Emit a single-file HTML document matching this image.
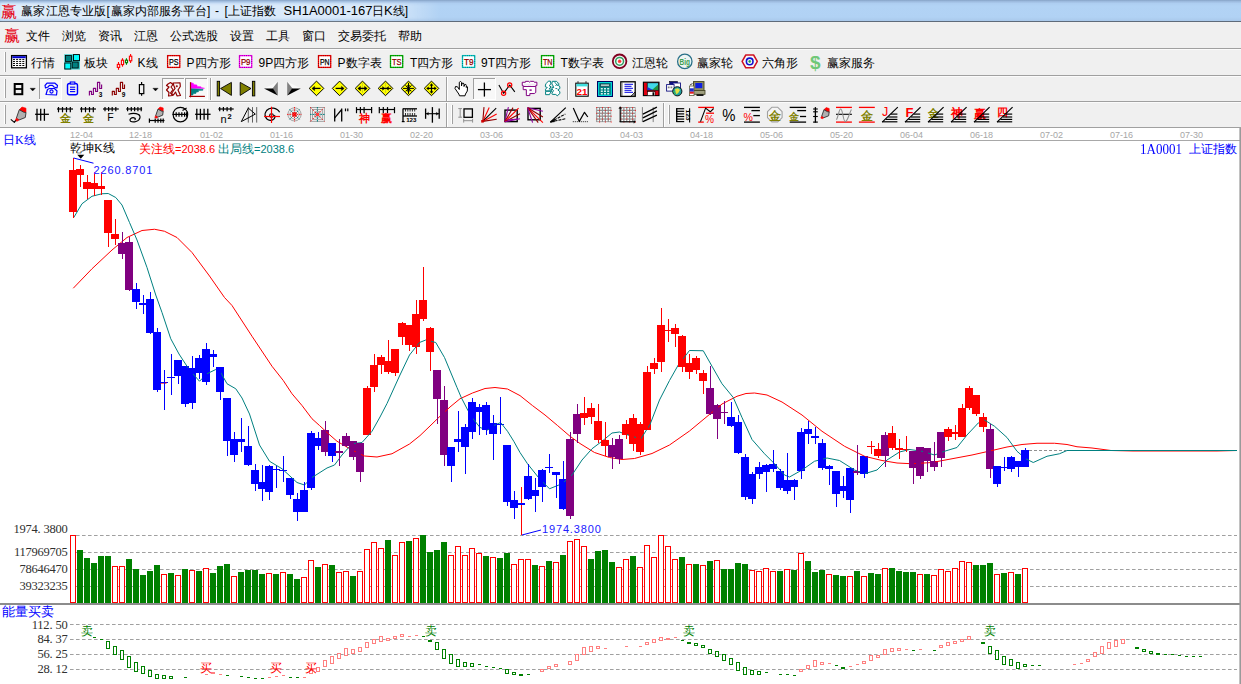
<!DOCTYPE html>
<html><head><meta charset="utf-8"><title>chart</title>
<style>
html,body{margin:0;padding:0}
body{width:1241px;height:684px;position:relative;overflow:hidden;background:#fff;font-family:"Liberation Sans",sans-serif;font-size:12px;color:#000}
.t{position:absolute;white-space:nowrap;line-height:14px;height:14px}
.cj{font-size:12px}
.blue{color:#0000ff}
.date{font-size:9px;color:#a6a6a6;line-height:10px;height:10px;margin-top:1px}
.n11{font-size:11px}
.lab{font-size:11px;color:#2020ff;letter-spacing:0.85px;line-height:13px}
.sim{font-family:"Liberation Serif",serif;font-size:12px}
.ax{width:67.5px;text-align:right;color:#303030;font-size:12.5px;letter-spacing:-0.25px}
#title{position:absolute;left:0;top:0;width:1241px;height:21px;background:linear-gradient(#86a3c6 0px,#9dbbdf 1.5px,#aecef1 3.5px,#b2d3f5 6px,#b1d2f4 17px,#a9c8ea 21px);border-bottom:1px solid #5f6b7a}
#menu{position:absolute;left:0;top:22px;width:1241px;height:26px;background:#f0f0f0}
.bar{position:absolute;left:0;width:1241px;background:#f0f0f0}
.sep{position:absolute;left:0;width:1241px;height:1px}
</style></head><body>
<div id="title"><div style="position:absolute;left:0;top:3px;width:440px;height:17px;background:linear-gradient(to right,rgba(255,255,255,.58) 0,rgba(255,255,255,.5) 88%,rgba(255,255,255,0) 100%);filter:blur(1.5px)"></div></div>
<div id="menu"></div>
<div class="bar" style="top:48px;height:80px"></div>
<svg width="1241" height="130" viewBox="0 0 1241 130" style="position:absolute;left:0;top:0">
<rect x="0.00" y="48.00" width="1241.00" height="1.00" fill="#a0a0a0" stroke="none" stroke-width="1" />
<rect x="0.00" y="75.00" width="1241.00" height="1.00" fill="#a0a0a0" stroke="none" stroke-width="1" />
<rect x="0.00" y="101.00" width="1241.00" height="1.00" fill="#a0a0a0" stroke="none" stroke-width="1" />
<rect x="0.00" y="127.00" width="1241.00" height="1.00" fill="#a0a0a0" stroke="none" stroke-width="1" />
<rect x="0.00" y="49.00" width="1241.00" height="1.00" fill="#fbfbfb" stroke="none" stroke-width="1" />
<rect x="0.00" y="76.00" width="1241.00" height="1.00" fill="#fbfbfb" stroke="none" stroke-width="1" />
<rect x="0.00" y="102.00" width="1241.00" height="1.00" fill="#fbfbfb" stroke="none" stroke-width="1" />
<rect x="4.00" y="52.00" width="1.00" height="20.00" fill="#ffffff" stroke="none" stroke-width="1" />
<rect x="5.00" y="52.00" width="1.00" height="20.00" fill="#a0a0a0" stroke="none" stroke-width="1" />
<rect x="4.00" y="79.00" width="1.00" height="19.00" fill="#ffffff" stroke="none" stroke-width="1" />
<rect x="5.00" y="79.00" width="1.00" height="19.00" fill="#a0a0a0" stroke="none" stroke-width="1" />
<rect x="4.00" y="105.00" width="1.00" height="19.00" fill="#ffffff" stroke="none" stroke-width="1" />
<rect x="5.00" y="105.00" width="1.00" height="19.00" fill="#a0a0a0" stroke="none" stroke-width="1" />
<rect x="451.00" y="105.00" width="1.00" height="19.00" fill="#ffffff" stroke="none" stroke-width="1" />
<rect x="452.00" y="105.00" width="1.00" height="19.00" fill="#a0a0a0" stroke="none" stroke-width="1" />
<rect x="668.00" y="105.00" width="1.00" height="19.00" fill="#ffffff" stroke="none" stroke-width="1" />
<rect x="669.00" y="105.00" width="1.00" height="19.00" fill="#a0a0a0" stroke="none" stroke-width="1" />
<rect x="210.00" y="78.00" width="1.00" height="22.00" fill="#a0a0a0" stroke="none" stroke-width="1" />
<rect x="211.00" y="78.00" width="1.00" height="22.00" fill="#ffffff" stroke="none" stroke-width="1" />
<rect x="446.00" y="77.00" width="1.00" height="24.00" fill="#a0a0a0" stroke="none" stroke-width="1" />
<rect x="447.00" y="77.00" width="1.00" height="24.00" fill="#ffffff" stroke="none" stroke-width="1" />
<rect x="567.00" y="78.00" width="1.00" height="22.00" fill="#a0a0a0" stroke="none" stroke-width="1" />
<rect x="568.00" y="78.00" width="1.00" height="22.00" fill="#ffffff" stroke="none" stroke-width="1" />
<rect x="446.00" y="103.00" width="1.00" height="24.00" fill="#a0a0a0" stroke="none" stroke-width="1" />
<rect x="447.00" y="103.00" width="1.00" height="24.00" fill="#ffffff" stroke="none" stroke-width="1" />
<rect x="663.00" y="103.00" width="1.00" height="24.00" fill="#a0a0a0" stroke="none" stroke-width="1" />
<rect x="664.00" y="103.00" width="1.00" height="24.00" fill="#ffffff" stroke="none" stroke-width="1" />
<rect x="11.60" y="55.60" width="14.80" height="12.20" fill="#fff" stroke="#000" stroke-width="1.3" />
<rect x="12.30" y="56.20" width="13.40" height="2.00" fill="#0000d0" stroke="none" stroke-width="1" />
<line x1="13.00" y1="59.40" x2="25.40" y2="59.40" stroke="#000" stroke-width="1.0" stroke-dasharray="2 1.1"/>
<line x1="13.00" y1="61.43" x2="25.40" y2="61.43" stroke="#000" stroke-width="1.0" stroke-dasharray="2 1.1"/>
<line x1="13.00" y1="63.46" x2="25.40" y2="63.46" stroke="#000" stroke-width="1.0" stroke-dasharray="2 1.1"/>
<line x1="13.00" y1="65.49" x2="25.40" y2="65.49" stroke="#000" stroke-width="1.0" stroke-dasharray="2 1.1"/>
<rect x="64.30" y="54.30" width="15.60" height="15.20" fill="#30c8c8" stroke="none" stroke-width="1" />
<rect x="65.50" y="55.50" width="6.00" height="6.00" fill="#008080" stroke="#000" stroke-width="0.8" />
<rect x="73.50" y="54.60" width="6.00" height="6.00" fill="#00ffff" stroke="#000" stroke-width="0.9" />
<rect x="64.80" y="63.00" width="6.00" height="6.00" fill="#00ffff" stroke="#000" stroke-width="0.9" />
<rect x="72.20" y="62.00" width="6.00" height="6.00" fill="#008080" stroke="#000" stroke-width="0.8" />
<line x1="118.50" y1="62.00" x2="118.50" y2="69.80" stroke="#ff0000" stroke-width="1.1" />
<rect x="117.30" y="64.40" width="2.40" height="3.00" fill="#f0f0f0" stroke="#ff0000" stroke-width="1.1" />
<line x1="122.50" y1="58.20" x2="122.50" y2="66.70" stroke="#ff0000" stroke-width="1.1" />
<rect x="121.40" y="60.20" width="2.20" height="4.40" fill="#f0f0f0" stroke="#ff0000" stroke-width="1.1" />
<line x1="126.45" y1="58.20" x2="126.45" y2="64.80" stroke="#008000" stroke-width="1.1" />
<rect x="125.40" y="60.20" width="2.10" height="2.50" fill="#f0f0f0" stroke="#008000" stroke-width="1.1" />
<line x1="130.60" y1="54.10" x2="130.60" y2="62.90" stroke="#ff0000" stroke-width="1.1" />
<rect x="129.40" y="56.20" width="2.40" height="4.60" fill="#f0f0f0" stroke="#ff0000" stroke-width="1.1" />
<rect x="167.60" y="55.60" width="12.20" height="11.80" fill="#fff" stroke="#ff0000" stroke-width="1.3" />
<rect x="167.60" y="55.60" width="12.20" height="11.80" fill="none" stroke="#000" stroke-width="1.2" stroke-dasharray="0.9 1.3" stroke-opacity="0.4"/>
<text x="173.80" y="65.10" font-size="8.8" fill="#000" font-weight="normal" text-anchor="middle" font-family="Liberation Sans, sans-serif" textLength="9.6" lengthAdjust="spacingAndGlyphs" stroke="#000" stroke-width="0.25">PS</text>
<rect x="239.50" y="55.60" width="12.20" height="11.80" fill="#fff" stroke="#ff00ff" stroke-width="1.3" />
<rect x="239.50" y="55.60" width="12.20" height="11.80" fill="none" stroke="#000" stroke-width="1.2" stroke-dasharray="0.9 1.3" stroke-opacity="0.4"/>
<text x="245.70" y="65.10" font-size="8.8" fill="#900000" font-weight="normal" text-anchor="middle" font-family="Liberation Sans, sans-serif" textLength="9.6" lengthAdjust="spacingAndGlyphs" stroke="#900000" stroke-width="0.25">P9</text>
<rect x="318.50" y="55.60" width="12.20" height="11.80" fill="#fff" stroke="#ff0000" stroke-width="1.3" />
<rect x="318.50" y="55.60" width="12.20" height="11.80" fill="none" stroke="#000" stroke-width="1.2" stroke-dasharray="0.9 1.3" stroke-opacity="0.4"/>
<text x="324.70" y="65.10" font-size="8.8" fill="#000" font-weight="normal" text-anchor="middle" font-family="Liberation Sans, sans-serif" textLength="9.6" lengthAdjust="spacingAndGlyphs" stroke="#000" stroke-width="0.25">PN</text>
<rect x="390.50" y="55.60" width="12.20" height="11.80" fill="#fff" stroke="#00c000" stroke-width="1.3" />
<rect x="390.50" y="55.60" width="12.20" height="11.80" fill="none" stroke="#000" stroke-width="1.2" stroke-dasharray="0.9 1.3" stroke-opacity="0.4"/>
<text x="396.70" y="65.10" font-size="8.8" fill="#900000" font-weight="normal" text-anchor="middle" font-family="Liberation Sans, sans-serif" textLength="9.6" lengthAdjust="spacingAndGlyphs" stroke="#900000" stroke-width="0.25">TS</text>
<rect x="462.50" y="55.60" width="12.20" height="11.80" fill="#fff" stroke="#00d0d0" stroke-width="1.3" />
<rect x="462.50" y="55.60" width="12.20" height="11.80" fill="none" stroke="#000" stroke-width="1.2" stroke-dasharray="0.9 1.3" stroke-opacity="0.4"/>
<text x="468.70" y="65.10" font-size="8.8" fill="#900000" font-weight="normal" text-anchor="middle" font-family="Liberation Sans, sans-serif" textLength="9.6" lengthAdjust="spacingAndGlyphs" stroke="#900000" stroke-width="0.25">T9</text>
<rect x="541.50" y="55.60" width="12.20" height="11.80" fill="#fff" stroke="#00c000" stroke-width="1.3" />
<rect x="541.50" y="55.60" width="12.20" height="11.80" fill="none" stroke="#000" stroke-width="1.2" stroke-dasharray="0.9 1.3" stroke-opacity="0.4"/>
<text x="547.70" y="65.10" font-size="8.8" fill="#900000" font-weight="normal" text-anchor="middle" font-family="Liberation Sans, sans-serif" textLength="9.6" lengthAdjust="spacingAndGlyphs" stroke="#900000" stroke-width="0.25">TN</text>
<circle cx="619.60" cy="61.30" r="6.80" fill="#f0f0f0" stroke="#800020" stroke-width="1.8"/>
<circle cx="619.60" cy="61.30" r="3.90" fill="#fff" stroke="#30a060" stroke-width="1.5"/>
<circle cx="619.60" cy="61.30" r="1.50" fill="#ff3030" stroke="#ff3030" stroke-width="0.5"/>
<circle cx="684.80" cy="61.40" r="7.20" fill="#eef4f4" stroke="#2a7088" stroke-width="1.3"/>
<text x="684.80" y="65.00" font-size="8.5" fill="#40a050" font-weight="bold" text-anchor="middle" font-family="Liberation Sans, sans-serif" textLength="10.5" lengthAdjust="spacingAndGlyphs">Big</text>
<polygon points="742.10,61.40 745.80,55.00 753.60,55.00 757.30,61.40 753.60,67.80 745.80,67.80" fill="#f8f8f8" stroke="#d01020" stroke-width="1.5" stroke-linejoin="round" />
<circle cx="749.70" cy="61.40" r="3.30" fill="#fff" stroke="#1010d0" stroke-width="1.6"/>
<circle cx="749.70" cy="61.40" r="1.10" fill="#20a040" stroke="#20a040" stroke-width="0.5"/>
<text x="815.20" y="68.50" font-size="19" fill="#70c878" font-weight="bold" text-anchor="middle" font-family="Liberation Sans, sans-serif" >$</text>
<rect x="14.70" y="84.00" width="7.60" height="10.20" fill="none" stroke="#000" stroke-width="2" />
<line x1="14.70" y1="89.00" x2="22.30" y2="89.00" stroke="#000" stroke-width="1.8" />
<polygon points="30.00,88.20 35.40,88.20 32.70,91.00" fill="#000" stroke="#000" stroke-width="0.3" stroke-linejoin="round" />
<rect x="39.00" y="78.00" width="22.00" height="21.00" fill="#f8f8f8" stroke="none" stroke-width="1" />
<rect x="39.00" y="78.00" width="22.00" height="1.00" fill="#a0a0a0" stroke="none" stroke-width="1" />
<rect x="39.00" y="78.00" width="1.00" height="21.00" fill="#a0a0a0" stroke="none" stroke-width="1" />
<rect x="39.00" y="99.00" width="22.00" height="1.00" fill="#ffffff" stroke="none" stroke-width="1" />
<rect x="61.00" y="78.00" width="1.00" height="22.00" fill="#ffffff" stroke="none" stroke-width="1" />
<polygon points="45.00,85.50 47.00,83.20 55.00,83.20 57.50,85.50 57.00,88.00 54.00,87.00 52.50,85.30 49.50,85.30 48.00,87.00 45.50,88.00" fill="none" stroke="#0000ff" stroke-width="1.2" stroke-linejoin="round" />
<polygon points="47.50,89.50 46.00,94.50 56.50,95.00 57.00,91.00 54.50,88.50 49.50,88.50" fill="none" stroke="#0000ff" stroke-width="1.2" stroke-linejoin="round" />
<circle cx="51.50" cy="91.50" r="1.60" fill="none" stroke="#0000ff" stroke-width="1.1"/>
<rect x="67.50" y="83.50" width="10.00" height="11.20" fill="none" stroke="#0000ff" stroke-width="1.4" rx="2"/>
<rect x="70.30" y="82.00" width="4.50" height="2.00" fill="#f0f0f0" stroke="#0000ff" stroke-width="1.1" />
<line x1="70.00" y1="87.20" x2="75.20" y2="87.20" stroke="#0000ff" stroke-width="1.1" />
<line x1="70.00" y1="89.40" x2="75.20" y2="89.40" stroke="#0000ff" stroke-width="1.1" />
<line x1="70.00" y1="91.60" x2="75.20" y2="91.60" stroke="#0000ff" stroke-width="1.1" />
<polyline points="89.40,95.60 89.40,91.30 91.50,91.30 91.50,94.50 93.40,94.50 93.40,88.30 95.60,88.30 95.60,91.50 97.50,91.50 97.50,82.30 99.70,82.30 99.70,88.50 101.60,88.50 101.60,84.40" fill="none" stroke="#800080" stroke-width="1.15" stroke-linejoin="round" />
<text x="98.80" y="96.80" font-size="6.5" fill="#000" font-weight="bold" text-anchor="start" font-family="Liberation Sans, sans-serif" >3</text>
<polyline points="112.30,95.60 112.30,91.30 114.40,91.30 114.40,94.50 116.30,94.50 116.30,88.30 118.50,88.30 118.50,91.50 120.40,91.50 120.40,82.30 122.60,82.30 122.60,88.50 124.50,88.50 124.50,84.40" fill="none" stroke="#8b0000" stroke-width="1.15" stroke-linejoin="round" />
<text x="121.70" y="96.80" font-size="6.5" fill="#000" font-weight="bold" text-anchor="start" font-family="Liberation Sans, sans-serif" >9</text>
<line x1="141.60" y1="82.00" x2="141.60" y2="95.80" stroke="#000" stroke-width="1.2" />
<rect x="139.40" y="84.60" width="4.40" height="9.00" fill="#f0f0f0" stroke="#000" stroke-width="1.2" />
<polygon points="152.80,88.20 158.20,88.20 155.50,91.00" fill="#000" stroke="#000" stroke-width="0.3" stroke-linejoin="round" />
<rect x="162.00" y="78.00" width="22.00" height="21.00" fill="#f8f8f8" stroke="none" stroke-width="1" />
<rect x="162.00" y="78.00" width="22.00" height="1.00" fill="#a0a0a0" stroke="none" stroke-width="1" />
<rect x="162.00" y="78.00" width="1.00" height="21.00" fill="#a0a0a0" stroke="none" stroke-width="1" />
<rect x="162.00" y="99.00" width="22.00" height="1.00" fill="#ffffff" stroke="none" stroke-width="1" />
<rect x="184.00" y="78.00" width="1.00" height="22.00" fill="#ffffff" stroke="none" stroke-width="1" />
<rect x="185.00" y="78.00" width="22.00" height="21.00" fill="#f8f8f8" stroke="none" stroke-width="1" />
<rect x="185.00" y="78.00" width="22.00" height="1.00" fill="#a0a0a0" stroke="none" stroke-width="1" />
<rect x="185.00" y="78.00" width="1.00" height="21.00" fill="#a0a0a0" stroke="none" stroke-width="1" />
<rect x="185.00" y="99.00" width="22.00" height="1.00" fill="#ffffff" stroke="none" stroke-width="1" />
<rect x="207.00" y="78.00" width="1.00" height="22.00" fill="#ffffff" stroke="none" stroke-width="1" />
<polygon points="168.00,84.00 170.50,82.50 173.00,84.50 171.00,87.00 173.00,89.50 170.50,93.00 172.50,95.50 168.50,96.00 169.00,92.50 166.50,90.00 169.00,87.00 166.50,85.50" fill="none" stroke="#900000" stroke-width="1.2" stroke-linejoin="round" />
<polygon points="173.00,83.00 180.00,82.80 180.30,86.50 178.00,90.00 180.50,95.50 177.00,95.80 175.50,92.00 173.50,95.00 171.50,93.50 175.00,88.50 174.00,86.00" fill="none" stroke="#900000" stroke-width="1.2" stroke-linejoin="round" />
<circle cx="176.80" cy="86.20" r="0.80" fill="#900000" stroke="#900000" stroke-width="0.5"/>
<polygon points="190.80,82.60 193.50,83.40 193.50,84.60 197.00,85.00 197.00,86.40 201.00,86.80 201.00,87.60 204.50,88.30 190.80,88.60" fill="#ff00ff" stroke="#ff00ff" stroke-width="0.5" stroke-linejoin="round" />
<polygon points="190.80,88.80 203.00,89.20 203.00,90.20 198.50,90.60 198.50,91.80 196.00,92.20 196.00,93.40 193.00,93.80 193.00,95.00 190.80,95.20" fill="#008080" stroke="#008080" stroke-width="0.5" stroke-linejoin="round" />
<line x1="190.50" y1="82.20" x2="190.50" y2="97.30" stroke="#a00000" stroke-width="1.2" />
<line x1="189.20" y1="96.40" x2="204.90" y2="96.40" stroke="#a00000" stroke-width="1.2" />
<rect x="217.20" y="81.30" width="2.40" height="14.60" fill="#808000" stroke="#000" stroke-width="0.9" />
<polygon points="220.60,88.50 231.40,82.40 231.40,95.40" fill="#808000" stroke="#000" stroke-width="0.9" stroke-linejoin="round" />
<polygon points="240.20,82.40 251.00,88.50 240.20,95.40" fill="#808000" stroke="#000" stroke-width="0.9" stroke-linejoin="round" />
<rect x="252.40" y="81.30" width="2.40" height="14.60" fill="#808000" stroke="#000" stroke-width="0.9" />
<polygon points="264.00,88.40 277.80,81.80 273.00,88.40" fill="#fafafa" stroke="none" stroke-width="0" stroke-linejoin="round" />
<polygon points="277.80,81.80 277.80,95.60 272.50,88.40" fill="#808080" stroke="none" stroke-width="0" stroke-linejoin="round" />
<polygon points="264.00,88.40 273.00,88.40 277.80,95.60" fill="#000" stroke="none" stroke-width="0" stroke-linejoin="round" />
<polygon points="300.80,88.40 287.20,81.80 292.00,88.40" fill="#fafafa" stroke="none" stroke-width="0" stroke-linejoin="round" />
<polygon points="287.20,81.80 287.20,95.60 292.50,88.40" fill="#808080" stroke="none" stroke-width="0" stroke-linejoin="round" />
<polygon points="300.80,88.40 292.00,88.40 287.20,95.60" fill="#000" stroke="none" stroke-width="0" stroke-linejoin="round" />
<polygon points="309.20,88.40 316.50,81.10 323.80,88.40 316.50,95.70" fill="#ffff00" stroke="#000" stroke-width="1" stroke-linejoin="round" />
<line x1="313.00" y1="88.40" x2="320.50" y2="88.40" stroke="#000" stroke-width="1.3" />
<polygon points="311.90,88.40 314.70,86.16 314.70,90.64" fill="#000" stroke="#000" stroke-width="0.3" stroke-linejoin="round" />
<polygon points="332.30,88.40 339.60,81.10 346.90,88.40 339.60,95.70" fill="#ffff00" stroke="#000" stroke-width="1" stroke-linejoin="round" />
<line x1="335.60" y1="88.40" x2="343.10" y2="88.40" stroke="#000" stroke-width="1.3" />
<polygon points="344.20,88.40 341.40,90.64 341.40,86.16" fill="#000" stroke="#000" stroke-width="0.3" stroke-linejoin="round" />
<polygon points="355.20,88.40 362.50,81.10 369.80,88.40 362.50,95.70" fill="#ffff00" stroke="#000" stroke-width="1" stroke-linejoin="round" />
<line x1="362.50" y1="83.40" x2="362.50" y2="93.40" stroke="#909060" stroke-width="0.8" stroke-dasharray="1 1"/>
<line x1="359.50" y1="88.40" x2="365.50" y2="88.40" stroke="#000" stroke-width="1.3" />
<polygon points="357.70,88.40 360.50,86.16 360.50,90.64" fill="#000" stroke="#000" stroke-width="0.3" stroke-linejoin="round" />
<polygon points="367.30,88.40 364.50,90.64 364.50,86.16" fill="#000" stroke="#000" stroke-width="0.3" stroke-linejoin="round" />
<polygon points="378.20,88.40 385.50,81.10 392.80,88.40 385.50,95.70" fill="#ffff00" stroke="#000" stroke-width="1" stroke-linejoin="round" />
<line x1="385.50" y1="83.40" x2="385.50" y2="93.40" stroke="#909060" stroke-width="0.8" stroke-dasharray="1 1"/>
<line x1="380.00" y1="88.40" x2="391.00" y2="88.40" stroke="#000" stroke-width="1.1" />
<polygon points="384.90,88.40 382.50,90.32 382.50,86.48" fill="#000" stroke="#000" stroke-width="0.3" stroke-linejoin="round" />
<polygon points="386.10,88.40 388.50,86.48 388.50,90.32" fill="#000" stroke="#000" stroke-width="0.3" stroke-linejoin="round" />
<polygon points="401.20,88.40 408.50,81.10 415.80,88.40 408.50,95.70" fill="#ffff00" stroke="#000" stroke-width="1" stroke-linejoin="round" />
<line x1="403.00" y1="88.40" x2="414.00" y2="88.40" stroke="#000" stroke-width="1" />
<line x1="408.50" y1="82.90" x2="408.50" y2="93.90" stroke="#000" stroke-width="1" />
<line x1="405.50" y1="85.40" x2="411.50" y2="91.40" stroke="#000" stroke-width="1" />
<line x1="405.50" y1="91.40" x2="411.50" y2="85.40" stroke="#000" stroke-width="1" />
<polygon points="408.50,87.60 406.90,85.60 410.10,85.60" fill="#000" stroke="#000" stroke-width="0.3" stroke-linejoin="round" />
<polygon points="408.50,89.20 410.10,91.20 406.90,91.20" fill="#000" stroke="#000" stroke-width="0.3" stroke-linejoin="round" />
<polygon points="424.20,88.40 431.50,81.10 438.80,88.40 431.50,95.70" fill="#ffff00" stroke="#000" stroke-width="1" stroke-linejoin="round" />
<line x1="428.00" y1="88.40" x2="435.00" y2="88.40" stroke="#000" stroke-width="1.2" />
<line x1="431.50" y1="84.90" x2="431.50" y2="91.90" stroke="#000" stroke-width="1.2" />
<polygon points="426.50,88.40 428.50,86.80 428.50,90.00" fill="#000" stroke="#000" stroke-width="0.3" stroke-linejoin="round" />
<polygon points="436.50,88.40 434.50,90.00 434.50,86.80" fill="#000" stroke="#000" stroke-width="0.3" stroke-linejoin="round" />
<polygon points="431.50,83.40 433.10,85.40 429.90,85.40" fill="#000" stroke="#000" stroke-width="0.3" stroke-linejoin="round" />
<polygon points="431.50,93.40 429.90,91.40 433.10,91.40" fill="#000" stroke="#000" stroke-width="0.3" stroke-linejoin="round" />
<polygon points="455.50,86.50 457.50,86.80 459.30,89.50 459.30,82.30 460.60,81.40 461.50,82.30 461.50,86.00 462.00,83.50 463.20,83.00 464.00,84.00 464.00,86.50 464.70,84.60 465.80,84.40 466.30,85.50 466.30,87.50 466.80,86.30 467.50,87.00 467.30,91.00 465.50,94.00 465.00,95.80 459.50,95.80 458.80,94.00 455.00,88.50" fill="#fff" stroke="#000" stroke-width="1" stroke-linejoin="round" />
<rect x="473.00" y="78.00" width="22.00" height="21.00" fill="#f8f8f8" stroke="none" stroke-width="1" />
<rect x="473.00" y="78.00" width="22.00" height="1.00" fill="#a0a0a0" stroke="none" stroke-width="1" />
<rect x="473.00" y="78.00" width="1.00" height="21.00" fill="#a0a0a0" stroke="none" stroke-width="1" />
<rect x="473.00" y="99.00" width="22.00" height="1.00" fill="#ffffff" stroke="none" stroke-width="1" />
<rect x="495.00" y="78.00" width="1.00" height="22.00" fill="#ffffff" stroke="none" stroke-width="1" />
<line x1="484.40" y1="82.50" x2="484.40" y2="96.60" stroke="#000" stroke-width="1.3" />
<line x1="477.90" y1="89.60" x2="491.00" y2="89.60" stroke="#000" stroke-width="1.3" />
<polyline points="498.90,85.00 503.60,93.30 509.70,85.00 514.80,91.90" fill="none" stroke="#000" stroke-width="1.1" stroke-linejoin="round" />
<circle cx="503.60" cy="93.30" r="2.10" fill="none" stroke="#ff0000" stroke-width="1.2"/>
<circle cx="509.70" cy="84.90" r="2.10" fill="none" stroke="#ff0000" stroke-width="1.2"/>
<polygon points="522.26,82.26 525.41,82.26 525.59,81.33 528.74,81.33 529.48,82.26 530.41,81.33 533.74,81.33 534.30,82.26 536.89,82.26 536.89,85.59 535.78,85.59 535.78,86.44 532.81,87.33 530.96,86.44 528.37,86.44 526.89,87.33 525.41,86.44 523.19,86.44 523.19,85.59 522.26,85.59" fill="#fff" stroke="#800080" stroke-width="1.0" stroke-linejoin="round" />
<polygon points="523.19,86.44 523.19,89.67 526.33,89.67 526.33,95.59 529.85,95.59 529.85,93.56 534.30,93.56 535.78,92.44 535.78,86.44" fill="#fff" stroke="#800080" stroke-width="1.0" stroke-linejoin="round" />
<rect x="529.48" y="89.41" width="2.20" height="1.40" fill="#800080" stroke="none" stroke-width="1" />
<line x1="523.56" y1="84.30" x2="535.78" y2="84.30" stroke="#e8d8e8" stroke-width="0.8" />
<polygon points="546.15,83.56 548.37,81.15 550.41,81.15 550.96,83.93 549.11,85.59 551.15,86.89 548.93,88.93 551.33,89.11 551.70,90.78 545.59,90.96 545.59,89.11 547.26,87.44 545.41,86.89 545.41,85.04" fill="#fff" stroke="#008080" stroke-width="1.0" stroke-linejoin="round" />
<polygon points="545.59,91.33 551.52,91.33 550.22,93.00 549.48,94.67 545.59,94.67" fill="#fff" stroke="#008080" stroke-width="1.0" stroke-linejoin="round" />
<polygon points="552.26,81.33 556.52,81.33 558.74,83.56 558.74,85.96 559.85,86.70 559.85,88.56 557.81,89.85 559.85,91.70 559.85,93.56 557.26,95.78 555.78,94.48 552.26,94.30 551.89,93.19 553.56,90.59 552.07,89.11 552.07,87.26 553.56,86.70 551.89,83.93" fill="#fff" stroke="#008080" stroke-width="1.0" stroke-linejoin="round" />
<line x1="554.67" y1="82.07" x2="557.81" y2="85.96" stroke="#008080" stroke-width="0.9" />
<line x1="557.81" y1="83.56" x2="555.41" y2="85.96" stroke="#008080" stroke-width="0.9" />
<line x1="552.63" y1="87.56" x2="554.11" y2="87.56" stroke="#008080" stroke-width="0.9" />
<line x1="555.41" y1="88.56" x2="557.26" y2="88.56" stroke="#008080" stroke-width="0.9" />
<rect x="575.80" y="83.20" width="12.40" height="13.00" fill="#fff" stroke="#000" stroke-width="1.1" />
<rect x="576.40" y="83.80" width="11.20" height="2.60" fill="#40e0e0" stroke="none" stroke-width="1" />
<line x1="578.00" y1="81.30" x2="578.00" y2="83.50" stroke="#404040" stroke-width="1.2" />
<line x1="586.00" y1="81.30" x2="586.00" y2="83.50" stroke="#404040" stroke-width="1.2" />
<text x="582.00" y="94.80" font-size="9.5" fill="#ff0000" font-weight="bold" text-anchor="middle" font-family="Liberation Sans, sans-serif" textLength="11" lengthAdjust="spacingAndGlyphs">21</text>
<rect x="597.60" y="81.60" width="14.80" height="14.80" fill="#008080" stroke="#000060" stroke-width="1.2" />
<rect x="598.60" y="82.60" width="12.80" height="12.80" fill="none" stroke="#00e0e0" stroke-width="1" />
<rect x="600.60" y="84.00" width="8.80" height="2.60" fill="#b0c8c8" stroke="#003040" stroke-width="0.6" />
<rect x="600.80" y="88.00" width="2.00" height="1.50" fill="#d8f0f0" stroke="none" stroke-width="1" />
<rect x="604.00" y="88.00" width="2.00" height="1.50" fill="#d8f0f0" stroke="none" stroke-width="1" />
<rect x="607.20" y="88.00" width="2.00" height="1.50" fill="#d8f0f0" stroke="none" stroke-width="1" />
<rect x="600.80" y="90.50" width="2.00" height="1.50" fill="#d8f0f0" stroke="none" stroke-width="1" />
<rect x="604.00" y="90.50" width="2.00" height="1.50" fill="#d8f0f0" stroke="none" stroke-width="1" />
<rect x="607.20" y="90.50" width="2.00" height="1.50" fill="#d8f0f0" stroke="none" stroke-width="1" />
<rect x="600.80" y="93.00" width="2.00" height="1.50" fill="#d8f0f0" stroke="none" stroke-width="1" />
<rect x="604.00" y="93.00" width="2.00" height="1.50" fill="#d8f0f0" stroke="none" stroke-width="1" />
<rect x="607.20" y="93.00" width="2.00" height="1.50" fill="#d8f0f0" stroke="none" stroke-width="1" />
<rect x="620.80" y="81.80" width="14.40" height="14.60" fill="#fff" stroke="#000" stroke-width="1.3" />
<line x1="622.30" y1="82.50" x2="622.30" y2="96.00" stroke="#606060" stroke-width="1.2" stroke-dasharray="1 1"/>
<line x1="624.50" y1="84.30" x2="633.00" y2="84.30" stroke="#0000e0" stroke-width="1" />
<line x1="624.50" y1="86.30" x2="631.50" y2="86.30" stroke="#0000e0" stroke-width="1" />
<line x1="624.50" y1="88.30" x2="633.00" y2="88.30" stroke="#0000e0" stroke-width="1" />
<line x1="624.50" y1="90.30" x2="631.50" y2="90.30" stroke="#0000e0" stroke-width="1" />
<line x1="624.50" y1="92.30" x2="633.00" y2="92.30" stroke="#0000e0" stroke-width="1" />
<polygon points="631.00,96.20 635.00,92.00 635.00,96.20" fill="#a0a0a0" stroke="#000" stroke-width="0.8" stroke-linejoin="round" />
<rect x="643.40" y="82.20" width="15.60" height="13.40" fill="#e00010" stroke="#000" stroke-width="1.1" />
<rect x="647.20" y="82.80" width="11.20" height="7.40" fill="#40d8e8" stroke="#000" stroke-width="0.7" />
<polygon points="652.00,90.00 658.20,84.50 658.20,90.00" fill="#209040" stroke="none" stroke-width="0" stroke-linejoin="round" />
<polygon points="647.40,90.00 647.40,87.00 653.00,90.00" fill="#2030d0" stroke="none" stroke-width="0" stroke-linejoin="round" />
<rect x="647.50" y="91.60" width="7.50" height="4.00" fill="#fff" stroke="#000" stroke-width="0.6" />
<rect x="652.50" y="92.30" width="1.60" height="3.30" fill="#000" stroke="none" stroke-width="1" />
<rect x="669.50" y="81.40" width="8.00" height="4.50" fill="#101080" stroke="#000" stroke-width="0.5" />
<rect x="673.00" y="83.00" width="7.50" height="6.00" fill="#fff" stroke="#101080" stroke-width="0.9" />
<rect x="666.60" y="84.60" width="7.50" height="6.50" fill="#fff" stroke="#101080" stroke-width="0.9" />
<rect x="667.80" y="86.50" width="1.80" height="1.80" fill="#808080" stroke="none" stroke-width="1" />
<rect x="670.50" y="86.50" width="1.80" height="1.80" fill="#808080" stroke="none" stroke-width="1" />
<circle cx="677.30" cy="91.30" r="4.60" fill="#20a0a0" stroke="#000" stroke-width="0.9"/>
<polygon points="675.00,89.00 678.00,88.20 680.00,90.00 678.50,92.50 676.50,94.50 675.50,92.00" fill="#e0e040" stroke="none" stroke-width="0" stroke-linejoin="round" />
<polyline points="673.50,91.00 675.00,93.50 674.50,94.50" fill="none" stroke="#40c040" stroke-width="1" stroke-linejoin="round" />
<rect x="693.50" y="81.60" width="10.50" height="9.00" fill="#909060" stroke="#404020" stroke-width="0.9" />
<rect x="695.30" y="83.00" width="7.00" height="5.20" fill="#1020e0" stroke="none" stroke-width="1" />
<rect x="692.50" y="90.50" width="12.50" height="3.80" fill="#a0a080" stroke="#404020" stroke-width="0.8" />
<rect x="696.50" y="94.30" width="7.00" height="1.60" fill="#000" stroke="none" stroke-width="1" />
<rect x="689.60" y="86.00" width="4.40" height="9.60" fill="#fff" stroke="#606040" stroke-width="0.8" />
<rect x="689.80" y="88.30" width="4.00" height="3.40" fill="#2030d0" stroke="none" stroke-width="1" />
<rect x="689.80" y="91.70" width="4.00" height="2.00" fill="#e02020" stroke="none" stroke-width="1" />
<line x1="690.00" y1="85.00" x2="692.50" y2="83.50" stroke="#303030" stroke-width="0.9" />
<polygon points="19.30,109.70 22.00,107.00 26.00,108.20 26.00,112.50 23.70,112.20" fill="#ff0000" stroke="#ff0000" stroke-width="0.6" stroke-linejoin="round" />
<polygon points="19.30,109.70 23.70,112.20 26.00,112.50 25.30,117.50 19.00,120.00 16.30,118.30" fill="#b0b0b0" stroke="#303030" stroke-width="0.9" stroke-linejoin="round" />
<polygon points="16.30,118.30 19.00,120.00 17.00,121.30 15.20,120.40" fill="#ff0000" stroke="#ff0000" stroke-width="0.6" stroke-linejoin="round" />
<polyline points="10.80,119.30 14.30,122.40 15.80,120.40" fill="none" stroke="#000" stroke-width="1.1" stroke-linejoin="round" />
<line x1="37.00" y1="108.80" x2="37.00" y2="120.80" stroke="#000" stroke-width="1.3" />
<line x1="40.70" y1="108.80" x2="40.70" y2="120.80" stroke="#000" stroke-width="1.3" />
<line x1="44.40" y1="108.80" x2="44.40" y2="120.80" stroke="#000" stroke-width="1.3" />
<line x1="35.10" y1="114.30" x2="48.90" y2="114.30" stroke="#000" stroke-width="1.3" />
<line x1="57.00" y1="109.00" x2="73.00" y2="109.00" stroke="#000" stroke-width="1.2" />
<line x1="58.50" y1="107.00" x2="58.50" y2="112.30" stroke="#000" stroke-width="1.2" />
<line x1="62.50" y1="107.00" x2="62.50" y2="112.30" stroke="#000" stroke-width="1.2" />
<line x1="66.50" y1="107.00" x2="66.50" y2="112.30" stroke="#000" stroke-width="1.2" />
<line x1="70.30" y1="107.00" x2="70.30" y2="112.30" stroke="#000" stroke-width="1.2" />
<text x="59.60" y="121.60" font-size="10.5" fill="#808000" font-weight="bold" text-anchor="start" font-family="Liberation Sans, sans-serif" >金</text>
<line x1="80.00" y1="109.00" x2="96.00" y2="109.00" stroke="#000" stroke-width="1.2" />
<line x1="81.50" y1="107.00" x2="81.50" y2="112.30" stroke="#000" stroke-width="1.2" />
<line x1="85.50" y1="107.00" x2="85.50" y2="112.30" stroke="#000" stroke-width="1.2" />
<line x1="89.50" y1="107.00" x2="89.50" y2="112.30" stroke="#000" stroke-width="1.2" />
<line x1="93.30" y1="107.00" x2="93.30" y2="112.30" stroke="#000" stroke-width="1.2" />
<text x="82.60" y="121.60" font-size="10.5" fill="#808000" font-weight="bold" text-anchor="start" font-family="Liberation Sans, sans-serif" >金</text>
<line x1="103.00" y1="109.00" x2="118.80" y2="109.00" stroke="#000" stroke-width="1.2" />
<line x1="105.00" y1="107.00" x2="105.00" y2="111.30" stroke="#000" stroke-width="1.2" />
<line x1="108.60" y1="107.00" x2="108.60" y2="111.30" stroke="#000" stroke-width="1.2" />
<line x1="112.20" y1="107.00" x2="112.20" y2="111.30" stroke="#000" stroke-width="1.2" />
<line x1="115.80" y1="107.00" x2="115.80" y2="111.30" stroke="#000" stroke-width="1.2" />
<text x="107.30" y="120.80" font-size="10.5" fill="#000" font-weight="normal" text-anchor="start" font-family="Liberation Sans, sans-serif" >F</text>
<line x1="126.20" y1="109.00" x2="142.10" y2="109.00" stroke="#000" stroke-width="1.2" />
<line x1="127.60" y1="107.00" x2="127.60" y2="111.30" stroke="#000" stroke-width="1.2" />
<line x1="131.30" y1="107.00" x2="131.30" y2="111.30" stroke="#000" stroke-width="1.2" />
<line x1="134.60" y1="107.00" x2="134.60" y2="111.30" stroke="#000" stroke-width="1.2" />
<line x1="137.90" y1="107.00" x2="137.90" y2="111.30" stroke="#000" stroke-width="1.2" />
<line x1="141.20" y1="107.00" x2="141.20" y2="111.30" stroke="#000" stroke-width="1.2" />
<path d="M128.5,114.2 C133,112.6 140.5,113 140,117.5 C139.5,121.5 133,122.8 130.6,121.2 C128.8,119.5 131.5,117.2 134,117.8 C135.8,118.2 135.6,119.6 134.6,120" fill="none" stroke="#000" stroke-width="1.2"/>
<polygon points="157.97,109.11 160.08,107.00 163.20,107.94 163.20,111.29 161.41,111.06" fill="#ff0000" stroke="#ff0000" stroke-width="0.6" stroke-linejoin="round" />
<polygon points="157.97,109.11 161.41,111.06 163.20,111.29 162.65,115.19 157.74,117.14 155.63,115.81" fill="#b0b0b0" stroke="#303030" stroke-width="0.9" stroke-linejoin="round" />
<polygon points="155.63,115.81 157.74,117.14 156.18,118.15 154.78,117.45" fill="#ff0000" stroke="#ff0000" stroke-width="0.6" stroke-linejoin="round" />
<line x1="149.10" y1="120.50" x2="164.50" y2="120.50" stroke="#000" stroke-width="1.2" />
<line x1="149.40" y1="118.40" x2="149.40" y2="122.70" stroke="#000" stroke-width="1.2" />
<line x1="155.20" y1="118.40" x2="155.20" y2="122.70" stroke="#000" stroke-width="1.2" />
<line x1="158.00" y1="118.40" x2="158.00" y2="122.70" stroke="#000" stroke-width="1.2" />
<line x1="160.80" y1="118.40" x2="160.80" y2="122.70" stroke="#000" stroke-width="1.2" />
<line x1="163.20" y1="118.40" x2="163.20" y2="122.70" stroke="#000" stroke-width="1.2" />
<circle cx="180.40" cy="114.60" r="7.30" fill="none" stroke="#000" stroke-width="1.2"/>
<line x1="172.50" y1="114.40" x2="188.00" y2="114.40" stroke="#000" stroke-width="1.2" />
<line x1="176.20" y1="112.30" x2="176.20" y2="116.80" stroke="#000" stroke-width="1.2" />
<line x1="179.00" y1="112.30" x2="179.00" y2="116.80" stroke="#000" stroke-width="1.2" />
<line x1="181.80" y1="112.30" x2="181.80" y2="116.80" stroke="#000" stroke-width="1.2" />
<line x1="184.60" y1="112.30" x2="184.60" y2="116.80" stroke="#000" stroke-width="1.2" />
<line x1="186.60" y1="112.30" x2="186.60" y2="116.80" stroke="#000" stroke-width="1.2" />
<line x1="182.50" y1="110.50" x2="186.60" y2="108.00" stroke="#000" stroke-width="1.1" />
<line x1="196.80" y1="108.80" x2="196.80" y2="119.80" stroke="#000" stroke-width="1.3" />
<line x1="200.40" y1="108.80" x2="200.40" y2="119.80" stroke="#000" stroke-width="1.3" />
<line x1="204.10" y1="108.80" x2="204.10" y2="119.80" stroke="#000" stroke-width="1.3" />
<line x1="207.80" y1="108.80" x2="207.80" y2="119.80" stroke="#000" stroke-width="1.3" />
<line x1="195.10" y1="114.30" x2="210.60" y2="114.30" stroke="#000" stroke-width="1.3" />
<line x1="218.30" y1="109.00" x2="233.70" y2="109.00" stroke="#000" stroke-width="1.2" />
<line x1="219.70" y1="107.00" x2="219.70" y2="111.30" stroke="#000" stroke-width="1.2" />
<line x1="223.40" y1="107.00" x2="223.40" y2="111.30" stroke="#000" stroke-width="1.2" />
<line x1="227.10" y1="107.00" x2="227.10" y2="111.30" stroke="#000" stroke-width="1.2" />
<line x1="230.90" y1="107.00" x2="230.90" y2="111.30" stroke="#000" stroke-width="1.2" />
<text x="220.60" y="122.60" font-size="11" fill="#000" font-weight="normal" text-anchor="start" font-family="Liberation Sans, sans-serif" >n</text>
<text x="227.60" y="118.80" font-size="7.5" fill="#000" font-weight="bold" text-anchor="start" font-family="Liberation Sans, sans-serif" >2</text>
<line x1="248.30" y1="107.10" x2="248.30" y2="122.60" stroke="#606060" stroke-width="1" />
<line x1="252.50" y1="107.10" x2="252.50" y2="122.60" stroke="#606060" stroke-width="1" />
<line x1="256.70" y1="107.10" x2="256.70" y2="122.60" stroke="#606060" stroke-width="1" />
<polygon points="241.30,121.60 248.30,108.10 255.30,114.10" fill="none" stroke="#000" stroke-width="1" stroke-linejoin="round" />
<path d="M279.6,112.3 C277,107.6 270,106.6 266.6,110.5 C263.5,114.5 265.5,120 270,120.3 C274,120.5 276,117.5 274.5,115" fill="none" stroke="#000" stroke-width="1.2"/>
<circle cx="271.50" cy="115.60" r="1.90" fill="none" stroke="#000" stroke-width="1.1"/>
<line x1="271.50" y1="106.70" x2="271.50" y2="123.00" stroke="#ff0000" stroke-width="1.2" />
<line x1="264.00" y1="116.50" x2="280.00" y2="116.50" stroke="#ff0000" stroke-width="1.2" />
<circle cx="294.50" cy="114.40" r="2.40" fill="none" stroke="#909090" stroke-width="0.8"/>
<circle cx="294.50" cy="114.40" r="4.60" fill="none" stroke="#909090" stroke-width="0.8"/>
<circle cx="294.50" cy="114.40" r="6.60" fill="none" stroke="#909090" stroke-width="0.8"/>
<line x1="287.10" y1="114.40" x2="301.90" y2="114.40" stroke="#ff0000" stroke-width="0.9" stroke-dasharray="1.4 1"/>
<line x1="294.50" y1="107.00" x2="294.50" y2="121.80" stroke="#ff0000" stroke-width="0.9" stroke-dasharray="1.4 1"/>
<line x1="289.50" y1="109.40" x2="299.50" y2="119.40" stroke="#008080" stroke-width="1" stroke-dasharray="1.6 1"/>
<line x1="289.50" y1="119.40" x2="299.50" y2="109.40" stroke="#008080" stroke-width="1" stroke-dasharray="1.6 1"/>
<line x1="292.50" y1="112.40" x2="296.50" y2="116.40" stroke="#ff0000" stroke-width="1.4" />
<line x1="292.50" y1="116.40" x2="296.50" y2="112.40" stroke="#ff0000" stroke-width="1.4" />
<rect x="314.80" y="111.80" width="5.20" height="5.20" fill="none" stroke="#909090" stroke-width="0.8" />
<rect x="312.50" y="109.50" width="9.80" height="9.80" fill="none" stroke="#909090" stroke-width="0.8" />
<rect x="310.50" y="107.50" width="13.80" height="13.80" fill="none" stroke="#909090" stroke-width="0.8" />
<line x1="310.00" y1="114.40" x2="324.80" y2="114.40" stroke="#008080" stroke-width="1" stroke-dasharray="1.6 1"/>
<line x1="317.40" y1="107.00" x2="317.40" y2="121.80" stroke="#008080" stroke-width="1" stroke-dasharray="1.6 1"/>
<line x1="310.40" y1="107.40" x2="324.40" y2="121.40" stroke="#ff0000" stroke-width="1" stroke-dasharray="1.4 1.8"/>
<line x1="310.40" y1="121.40" x2="324.40" y2="107.40" stroke="#ff0000" stroke-width="1" stroke-dasharray="1.4 1.8"/>
<rect x="315.80" y="112.80" width="3.20" height="3.20" fill="#ff4040" stroke="none" stroke-width="1" />
<polyline points="334.70,108.50 334.70,121.60" fill="none" stroke="#000" stroke-width="1.3" stroke-linejoin="round" />
<polyline points="341.70,108.50 341.70,121.60" fill="none" stroke="#000" stroke-width="1.3" stroke-linejoin="round" />
<line x1="334.70" y1="117.80" x2="341.70" y2="109.50" stroke="#000" stroke-width="1.2" />
<line x1="345.50" y1="108.50" x2="345.50" y2="111.30" stroke="#000" stroke-width="1.2" />
<line x1="347.80" y1="108.50" x2="347.80" y2="111.30" stroke="#000" stroke-width="1.2" />
<line x1="356.20" y1="109.50" x2="372.10" y2="109.50" stroke="#000" stroke-width="1.2" />
<line x1="356.50" y1="107.10" x2="356.50" y2="113.20" stroke="#000" stroke-width="1.2" />
<line x1="360.40" y1="107.10" x2="360.40" y2="113.20" stroke="#000" stroke-width="1.2" />
<line x1="364.10" y1="107.10" x2="364.10" y2="113.20" stroke="#000" stroke-width="1.2" />
<line x1="371.60" y1="107.10" x2="371.60" y2="113.20" stroke="#000" stroke-width="1.2" />
<text x="359.00" y="122.20" font-size="10.5" fill="#ff0000" font-weight="bold" text-anchor="start" font-family="Liberation Sans, sans-serif" >神</text>
<line x1="379.10" y1="109.50" x2="395.00" y2="109.50" stroke="#000" stroke-width="1.2" />
<line x1="379.30" y1="107.10" x2="379.30" y2="113.20" stroke="#000" stroke-width="1.2" />
<line x1="383.30" y1="107.10" x2="383.30" y2="113.20" stroke="#000" stroke-width="1.2" />
<line x1="387.50" y1="107.10" x2="387.50" y2="113.20" stroke="#000" stroke-width="1.2" />
<line x1="394.50" y1="107.10" x2="394.50" y2="113.20" stroke="#000" stroke-width="1.2" />
<text x="381.00" y="122.20" font-size="10.5" fill="#ff0000" font-weight="bold" text-anchor="start" font-family="Liberation Sans, sans-serif" >赢</text>
<line x1="403.00" y1="108.50" x2="403.00" y2="121.60" stroke="#000" stroke-width="1.3" />
<line x1="403.00" y1="108.80" x2="417.00" y2="108.80" stroke="#000" stroke-width="1.3" />
<line x1="403.00" y1="116.00" x2="417.00" y2="116.00" stroke="#000" stroke-width="1.3" />
<line x1="405.50" y1="109.00" x2="405.50" y2="111.50" stroke="#000" stroke-width="0.8" />
<line x1="405.50" y1="113.00" x2="405.50" y2="115.80" stroke="#000" stroke-width="0.8" />
<line x1="407.80" y1="109.00" x2="407.80" y2="111.50" stroke="#000" stroke-width="0.8" />
<line x1="407.80" y1="113.00" x2="407.80" y2="115.80" stroke="#000" stroke-width="0.8" />
<line x1="410.10" y1="109.00" x2="410.10" y2="111.50" stroke="#000" stroke-width="0.8" />
<line x1="410.10" y1="113.00" x2="410.10" y2="115.80" stroke="#000" stroke-width="0.8" />
<line x1="412.40" y1="109.00" x2="412.40" y2="111.50" stroke="#000" stroke-width="0.8" />
<line x1="412.40" y1="113.00" x2="412.40" y2="115.80" stroke="#000" stroke-width="0.8" />
<line x1="414.70" y1="109.00" x2="414.70" y2="111.50" stroke="#000" stroke-width="0.8" />
<line x1="414.70" y1="113.00" x2="414.70" y2="115.80" stroke="#000" stroke-width="0.8" />
<line x1="401.80" y1="121.60" x2="404.60" y2="121.60" stroke="#000" stroke-width="1.2" />
<text x="406.20" y="122.30" font-size="5" fill="#000" font-weight="bold" text-anchor="start" font-family="Liberation Sans, sans-serif" textLength="10.3" lengthAdjust="spacingAndGlyphs">123</text>
<line x1="425.60" y1="108.50" x2="425.60" y2="118.80" stroke="#000" stroke-width="1.3" />
<line x1="439.20" y1="108.50" x2="439.20" y2="118.80" stroke="#000" stroke-width="1.3" />
<line x1="432.40" y1="107.10" x2="432.40" y2="122.70" stroke="#000" stroke-width="1.3" />
<line x1="425.60" y1="113.70" x2="439.20" y2="113.70" stroke="#000" stroke-width="1.1" />
<polygon points="426.60,113.70 428.40,112.26 428.40,115.14" fill="#000" stroke="#000" stroke-width="0.3" stroke-linejoin="round" />
<polygon points="438.20,113.70 436.40,115.14 436.40,112.26" fill="#000" stroke="#000" stroke-width="0.3" stroke-linejoin="round" />
<rect x="464.00" y="108.90" width="8.40" height="8.40" fill="none" stroke="#000" stroke-width="1.3" />
<line x1="460.20" y1="108.40" x2="460.20" y2="117.40" stroke="#909090" stroke-width="1" />
<line x1="458.30" y1="108.60" x2="462.00" y2="108.60" stroke="#909090" stroke-width="1" />
<line x1="458.30" y1="117.20" x2="462.00" y2="117.20" stroke="#909090" stroke-width="1" />
<line x1="463.50" y1="120.70" x2="472.80" y2="120.70" stroke="#909090" stroke-width="1" />
<line x1="463.70" y1="118.80" x2="463.70" y2="122.60" stroke="#909090" stroke-width="1" />
<line x1="472.60" y1="118.80" x2="472.60" y2="122.60" stroke="#909090" stroke-width="1" />
<line x1="482.80" y1="121.40" x2="484.00" y2="107.10" stroke="#900000" stroke-width="1.1" />
<line x1="482.80" y1="121.40" x2="489.20" y2="107.60" stroke="#ff0000" stroke-width="1.1" />
<line x1="482.80" y1="121.40" x2="496.20" y2="108.10" stroke="#000" stroke-width="1.1" />
<line x1="482.80" y1="121.40" x2="496.70" y2="114.10" stroke="#ff0000" stroke-width="1.1" />
<line x1="482.80" y1="121.40" x2="496.70" y2="119.30" stroke="#900000" stroke-width="1.1" />
<rect x="481.20" y="120.00" width="2.60" height="2.60" fill="#d00000" stroke="none" stroke-width="1" />
<rect x="505.00" y="110.10" width="12.20" height="11.50" fill="none" stroke="#000" stroke-width="1.4" />
<line x1="504.80" y1="121.80" x2="508.40" y2="107.10" stroke="#9000a0" stroke-width="1.1" />
<line x1="504.80" y1="121.80" x2="513.00" y2="107.60" stroke="#900000" stroke-width="1.1" />
<line x1="504.80" y1="121.80" x2="518.60" y2="108.10" stroke="#ff0000" stroke-width="1.1" />
<line x1="504.80" y1="121.80" x2="520.00" y2="113.70" stroke="#900000" stroke-width="1.1" />
<line x1="504.80" y1="121.80" x2="520.00" y2="118.80" stroke="#9000a0" stroke-width="1.1" />
<line x1="507.00" y1="120.00" x2="518.00" y2="119.00" stroke="#9000a0" stroke-width="1" />
<rect x="528.00" y="108.40" width="12.20" height="11.40" fill="none" stroke="#000" stroke-width="1.4" />
<line x1="527.60" y1="107.80" x2="542.90" y2="111.30" stroke="#9000a0" stroke-width="1.1" />
<line x1="527.60" y1="107.80" x2="542.90" y2="117.00" stroke="#900000" stroke-width="1.1" />
<line x1="527.60" y1="107.80" x2="542.90" y2="122.60" stroke="#ff0000" stroke-width="1.1" />
<line x1="527.60" y1="107.80" x2="538.20" y2="122.60" stroke="#900000" stroke-width="1.1" />
<line x1="527.60" y1="107.80" x2="532.60" y2="122.60" stroke="#9000a0" stroke-width="1.1" />
<line x1="550.60" y1="121.90" x2="565.80" y2="107.60" stroke="#000" stroke-width="1.2" />
<line x1="550.60" y1="121.90" x2="565.30" y2="114.10" stroke="#000" stroke-width="1.1" stroke-dasharray="3 1"/>
<line x1="550.60" y1="121.90" x2="565.30" y2="118.80" stroke="#000" stroke-width="1.1" stroke-dasharray="3 1"/>
<polygon points="550.20,122.20 554.50,119.20 554.50,121.80" fill="#000" stroke="#000" stroke-width="0.5" stroke-linejoin="round" />
<polyline points="573.30,108.10 579.30,121.40 584.50,112.30 587.80,117.00" fill="none" stroke="#000" stroke-width="1.2" stroke-linejoin="round" />
<line x1="572.80" y1="121.70" x2="588.20" y2="121.70" stroke="#000" stroke-width="0.9" stroke-dasharray="1 1"/>
<rect x="596.20" y="107.10" width="15.00" height="15.00" fill="#8c8c8c" stroke="none" stroke-width="1" />
<rect x="597.25" y="108.05" width="1.70" height="1.70" fill="#fff" stroke="none" stroke-width="1" />
<rect x="600.15" y="108.05" width="1.70" height="1.70" fill="#fff" stroke="none" stroke-width="1" />
<rect x="603.05" y="108.05" width="1.70" height="1.70" fill="#fff" stroke="none" stroke-width="1" />
<rect x="605.95" y="108.05" width="1.70" height="1.70" fill="#fff" stroke="none" stroke-width="1" />
<rect x="608.85" y="108.05" width="1.70" height="1.70" fill="#fff" stroke="none" stroke-width="1" />
<rect x="597.25" y="110.95" width="1.70" height="1.70" fill="#fff" stroke="none" stroke-width="1" />
<rect x="600.15" y="110.95" width="1.70" height="1.70" fill="#fff" stroke="none" stroke-width="1" />
<rect x="603.05" y="110.95" width="1.70" height="1.70" fill="#fff" stroke="none" stroke-width="1" />
<rect x="605.95" y="110.95" width="1.70" height="1.70" fill="#fff" stroke="none" stroke-width="1" />
<rect x="608.85" y="110.95" width="1.70" height="1.70" fill="#fff" stroke="none" stroke-width="1" />
<rect x="597.25" y="113.85" width="1.70" height="1.70" fill="#fff" stroke="none" stroke-width="1" />
<rect x="600.15" y="113.85" width="1.70" height="1.70" fill="#fff" stroke="none" stroke-width="1" />
<rect x="603.05" y="113.85" width="1.70" height="1.70" fill="#fff" stroke="none" stroke-width="1" />
<rect x="605.95" y="113.85" width="1.70" height="1.70" fill="#fff" stroke="none" stroke-width="1" />
<rect x="608.85" y="113.85" width="1.70" height="1.70" fill="#fff" stroke="none" stroke-width="1" />
<rect x="597.25" y="116.75" width="1.70" height="1.70" fill="#fff" stroke="none" stroke-width="1" />
<rect x="600.15" y="116.75" width="1.70" height="1.70" fill="#fff" stroke="none" stroke-width="1" />
<rect x="603.05" y="116.75" width="1.70" height="1.70" fill="#fff" stroke="none" stroke-width="1" />
<rect x="605.95" y="116.75" width="1.70" height="1.70" fill="#fff" stroke="none" stroke-width="1" />
<rect x="608.85" y="116.75" width="1.70" height="1.70" fill="#fff" stroke="none" stroke-width="1" />
<rect x="597.25" y="119.65" width="1.70" height="1.70" fill="#fff" stroke="none" stroke-width="1" />
<rect x="600.15" y="119.65" width="1.70" height="1.70" fill="#fff" stroke="none" stroke-width="1" />
<rect x="603.05" y="119.65" width="1.70" height="1.70" fill="#fff" stroke="none" stroke-width="1" />
<rect x="605.95" y="119.65" width="1.70" height="1.70" fill="#fff" stroke="none" stroke-width="1" />
<rect x="608.85" y="119.65" width="1.70" height="1.70" fill="#fff" stroke="none" stroke-width="1" />
<rect x="596.20" y="107.00" width="1.00" height="1.00" fill="#ff2020" stroke="none" stroke-width="1" />
<rect x="602.00" y="107.00" width="1.00" height="1.00" fill="#ff2020" stroke="none" stroke-width="1" />
<rect x="607.80" y="107.00" width="1.00" height="1.00" fill="#ff2020" stroke="none" stroke-width="1" />
<rect x="599.10" y="109.90" width="1.00" height="1.00" fill="#ff2020" stroke="none" stroke-width="1" />
<rect x="604.90" y="109.90" width="1.00" height="1.00" fill="#ff2020" stroke="none" stroke-width="1" />
<rect x="610.70" y="109.90" width="1.00" height="1.00" fill="#ff2020" stroke="none" stroke-width="1" />
<rect x="596.20" y="112.80" width="1.00" height="1.00" fill="#ff2020" stroke="none" stroke-width="1" />
<rect x="602.00" y="112.80" width="1.00" height="1.00" fill="#ff2020" stroke="none" stroke-width="1" />
<rect x="607.80" y="112.80" width="1.00" height="1.00" fill="#ff2020" stroke="none" stroke-width="1" />
<rect x="599.10" y="115.70" width="1.00" height="1.00" fill="#ff2020" stroke="none" stroke-width="1" />
<rect x="604.90" y="115.70" width="1.00" height="1.00" fill="#ff2020" stroke="none" stroke-width="1" />
<rect x="610.70" y="115.70" width="1.00" height="1.00" fill="#ff2020" stroke="none" stroke-width="1" />
<rect x="596.20" y="118.60" width="1.00" height="1.00" fill="#ff2020" stroke="none" stroke-width="1" />
<rect x="602.00" y="118.60" width="1.00" height="1.00" fill="#ff2020" stroke="none" stroke-width="1" />
<rect x="607.80" y="118.60" width="1.00" height="1.00" fill="#ff2020" stroke="none" stroke-width="1" />
<rect x="599.10" y="121.50" width="1.00" height="1.00" fill="#ff2020" stroke="none" stroke-width="1" />
<rect x="604.90" y="121.50" width="1.00" height="1.00" fill="#ff2020" stroke="none" stroke-width="1" />
<rect x="610.70" y="121.50" width="1.00" height="1.00" fill="#ff2020" stroke="none" stroke-width="1" />
<circle cx="603.70" cy="114.60" r="1.60" fill="none" stroke="#a0a0a0" stroke-width="0.7"/>
<rect x="620.50" y="107.10" width="15.00" height="15.00" fill="#8c8c8c" stroke="none" stroke-width="1" />
<rect x="621.55" y="108.05" width="1.70" height="1.70" fill="#fff" stroke="none" stroke-width="1" />
<rect x="624.45" y="108.05" width="1.70" height="1.70" fill="#fff" stroke="none" stroke-width="1" />
<rect x="627.35" y="108.05" width="1.70" height="1.70" fill="#fff" stroke="none" stroke-width="1" />
<rect x="630.25" y="108.05" width="1.70" height="1.70" fill="#fff" stroke="none" stroke-width="1" />
<rect x="633.15" y="108.05" width="1.70" height="1.70" fill="#fff" stroke="none" stroke-width="1" />
<rect x="621.55" y="110.95" width="1.70" height="1.70" fill="#fff" stroke="none" stroke-width="1" />
<rect x="624.45" y="110.95" width="1.70" height="1.70" fill="#fff" stroke="none" stroke-width="1" />
<rect x="627.35" y="110.95" width="1.70" height="1.70" fill="#fff" stroke="none" stroke-width="1" />
<rect x="630.25" y="110.95" width="1.70" height="1.70" fill="#fff" stroke="none" stroke-width="1" />
<rect x="633.15" y="110.95" width="1.70" height="1.70" fill="#fff" stroke="none" stroke-width="1" />
<rect x="621.55" y="113.85" width="1.70" height="1.70" fill="#fff" stroke="none" stroke-width="1" />
<rect x="624.45" y="113.85" width="1.70" height="1.70" fill="#fff" stroke="none" stroke-width="1" />
<rect x="627.35" y="113.85" width="1.70" height="1.70" fill="#fff" stroke="none" stroke-width="1" />
<rect x="630.25" y="113.85" width="1.70" height="1.70" fill="#fff" stroke="none" stroke-width="1" />
<rect x="633.15" y="113.85" width="1.70" height="1.70" fill="#fff" stroke="none" stroke-width="1" />
<rect x="621.55" y="116.75" width="1.70" height="1.70" fill="#fff" stroke="none" stroke-width="1" />
<rect x="624.45" y="116.75" width="1.70" height="1.70" fill="#fff" stroke="none" stroke-width="1" />
<rect x="627.35" y="116.75" width="1.70" height="1.70" fill="#fff" stroke="none" stroke-width="1" />
<rect x="630.25" y="116.75" width="1.70" height="1.70" fill="#fff" stroke="none" stroke-width="1" />
<rect x="633.15" y="116.75" width="1.70" height="1.70" fill="#fff" stroke="none" stroke-width="1" />
<rect x="621.55" y="119.65" width="1.70" height="1.70" fill="#fff" stroke="none" stroke-width="1" />
<rect x="624.45" y="119.65" width="1.70" height="1.70" fill="#fff" stroke="none" stroke-width="1" />
<rect x="627.35" y="119.65" width="1.70" height="1.70" fill="#fff" stroke="none" stroke-width="1" />
<rect x="630.25" y="119.65" width="1.70" height="1.70" fill="#fff" stroke="none" stroke-width="1" />
<rect x="633.15" y="119.65" width="1.70" height="1.70" fill="#fff" stroke="none" stroke-width="1" />
<rect x="620.50" y="107.00" width="1.00" height="1.00" fill="#ff2020" stroke="none" stroke-width="1" />
<rect x="626.30" y="107.00" width="1.00" height="1.00" fill="#ff2020" stroke="none" stroke-width="1" />
<rect x="632.10" y="107.00" width="1.00" height="1.00" fill="#ff2020" stroke="none" stroke-width="1" />
<rect x="623.40" y="109.90" width="1.00" height="1.00" fill="#ff2020" stroke="none" stroke-width="1" />
<rect x="629.20" y="109.90" width="1.00" height="1.00" fill="#ff2020" stroke="none" stroke-width="1" />
<rect x="635.00" y="109.90" width="1.00" height="1.00" fill="#ff2020" stroke="none" stroke-width="1" />
<rect x="620.50" y="112.80" width="1.00" height="1.00" fill="#ff2020" stroke="none" stroke-width="1" />
<rect x="626.30" y="112.80" width="1.00" height="1.00" fill="#ff2020" stroke="none" stroke-width="1" />
<rect x="632.10" y="112.80" width="1.00" height="1.00" fill="#ff2020" stroke="none" stroke-width="1" />
<rect x="623.40" y="115.70" width="1.00" height="1.00" fill="#ff2020" stroke="none" stroke-width="1" />
<rect x="629.20" y="115.70" width="1.00" height="1.00" fill="#ff2020" stroke="none" stroke-width="1" />
<rect x="635.00" y="115.70" width="1.00" height="1.00" fill="#ff2020" stroke="none" stroke-width="1" />
<rect x="620.50" y="118.60" width="1.00" height="1.00" fill="#ff2020" stroke="none" stroke-width="1" />
<rect x="626.30" y="118.60" width="1.00" height="1.00" fill="#ff2020" stroke="none" stroke-width="1" />
<rect x="632.10" y="118.60" width="1.00" height="1.00" fill="#ff2020" stroke="none" stroke-width="1" />
<rect x="623.40" y="121.50" width="1.00" height="1.00" fill="#ff2020" stroke="none" stroke-width="1" />
<rect x="629.20" y="121.50" width="1.00" height="1.00" fill="#ff2020" stroke="none" stroke-width="1" />
<rect x="635.00" y="121.50" width="1.00" height="1.00" fill="#ff2020" stroke="none" stroke-width="1" />
<circle cx="628.00" cy="114.60" r="1.60" fill="none" stroke="#a0a0a0" stroke-width="0.7"/>
<line x1="620.20" y1="107.40" x2="620.20" y2="122.00" stroke="#000" stroke-width="1.1" />
<line x1="619.60" y1="121.80" x2="634.50" y2="121.80" stroke="#000" stroke-width="1.1" />
<polygon points="620.20,106.60 621.64,108.40 618.76,108.40" fill="#000" stroke="#000" stroke-width="0.3" stroke-linejoin="round" />
<polygon points="635.60,121.80 633.80,123.24 633.80,120.36" fill="#000" stroke="#000" stroke-width="0.3" stroke-linejoin="round" />
<line x1="642.40" y1="107.10" x2="642.40" y2="122.10" stroke="#808080" stroke-width="1" />
<line x1="653.20" y1="107.10" x2="653.20" y2="122.10" stroke="#808080" stroke-width="1" />
<line x1="642.90" y1="114.10" x2="656.90" y2="107.10" stroke="#000" stroke-width="1.2" />
<line x1="642.90" y1="117.90" x2="656.90" y2="110.90" stroke="#000" stroke-width="1.2" />
<line x1="642.90" y1="121.60" x2="656.90" y2="115.10" stroke="#000" stroke-width="1.2" />
<line x1="676.70" y1="108.30" x2="676.70" y2="122.00" stroke="#000" stroke-width="1.4" />
<line x1="676.20" y1="108.70" x2="684.20" y2="108.70" stroke="#000" stroke-width="1.2" />
<line x1="676.20" y1="111.30" x2="684.20" y2="111.30" stroke="#000" stroke-width="1.2" />
<line x1="676.20" y1="113.90" x2="684.20" y2="113.90" stroke="#000" stroke-width="1.2" />
<line x1="676.20" y1="116.50" x2="684.20" y2="116.50" stroke="#000" stroke-width="1.2" />
<line x1="676.20" y1="119.10" x2="684.20" y2="119.10" stroke="#000" stroke-width="1.2" />
<line x1="676.20" y1="121.60" x2="684.20" y2="121.60" stroke="#000" stroke-width="1.2" />
<text x="0.00" y="0.00" font-size="5" fill="#000" font-weight="bold" text-anchor="start" font-family="Liberation Sans, sans-serif" transform="translate(686.2,109.5) rotate(90)" textLength="11" lengthAdjust="spacingAndGlyphs">123</text>
<line x1="689.60" y1="108.30" x2="689.60" y2="122.60" stroke="#000" stroke-width="1.1" />
<line x1="698.20" y1="107.40" x2="714.00" y2="107.40" stroke="#ff0000" stroke-width="1.3" />
<line x1="698.20" y1="122.10" x2="703.80" y2="122.10" stroke="#ff0000" stroke-width="1.3" />
<line x1="706.10" y1="113.20" x2="714.00" y2="113.20" stroke="#ff0000" stroke-width="1.3" />
<polyline points="700.50,121.60 705.60,108.10 710.30,111.80 713.60,108.50" fill="none" stroke="#000" stroke-width="1.1" stroke-linejoin="round" />
<text x="705.00" y="122.60" font-size="10.5" fill="#ff0000" font-weight="normal" text-anchor="start" font-family="Liberation Sans, sans-serif" textLength="9" lengthAdjust="spacingAndGlyphs">%</text>
<text x="722.30" y="121.30" font-size="17" fill="#000" font-weight="normal" text-anchor="start" font-family="Liberation Sans, sans-serif" textLength="13.2" lengthAdjust="spacingAndGlyphs">%</text>
<line x1="744.00" y1="107.40" x2="759.90" y2="107.40" stroke="#000" stroke-width="1.3" />
<line x1="751.40" y1="110.60" x2="759.90" y2="110.60" stroke="#000" stroke-width="1.3" />
<line x1="753.30" y1="115.60" x2="759.90" y2="115.60" stroke="#000" stroke-width="1.3" />
<line x1="744.00" y1="122.10" x2="759.90" y2="122.10" stroke="#000" stroke-width="1.3" />
<text x="743.60" y="121.00" font-size="10.5" fill="#ff0000" font-weight="normal" text-anchor="start" font-family="Liberation Sans, sans-serif" textLength="9.4" lengthAdjust="spacingAndGlyphs">%</text>
<polygon points="782.10,117.62 777.82,121.90 771.78,121.90 767.50,117.62 767.50,111.58 771.78,107.30 777.82,107.30 782.10,111.58" fill="#f4f4f4" stroke="#a0a0a0" stroke-width="1.1" stroke-linejoin="round" />
<text x="769.00" y="119.60" font-size="11.5" fill="#808000" font-weight="bold" text-anchor="start" font-family="Liberation Sans, sans-serif" >金</text>
<line x1="789.70" y1="107.40" x2="806.10" y2="107.40" stroke="#000" stroke-width="1.3" />
<line x1="797.20" y1="110.60" x2="806.10" y2="110.60" stroke="#000" stroke-width="1.3" />
<line x1="800.00" y1="116.50" x2="806.10" y2="116.50" stroke="#000" stroke-width="1.3" />
<line x1="789.70" y1="122.10" x2="806.10" y2="122.10" stroke="#000" stroke-width="1.3" />
<text x="789.40" y="120.20" font-size="10" fill="#808000" font-weight="bold" text-anchor="start" font-family="Liberation Sans, sans-serif" >金</text>
<line x1="815.40" y1="107.10" x2="815.40" y2="122.60" stroke="#000" stroke-width="1.3" />
<line x1="813.10" y1="109.00" x2="817.80" y2="109.00" stroke="#000" stroke-width="1.1" />
<line x1="813.10" y1="111.80" x2="817.80" y2="111.80" stroke="#000" stroke-width="1.1" />
<line x1="813.10" y1="116.50" x2="817.80" y2="116.50" stroke="#000" stroke-width="1.1" />
<line x1="813.10" y1="122.10" x2="817.80" y2="122.10" stroke="#000" stroke-width="1.2" />
<polygon points="823.97,109.71 826.08,107.60 829.20,108.54 829.20,111.89 827.41,111.66" fill="#ff0000" stroke="#ff0000" stroke-width="0.6" stroke-linejoin="round" />
<polygon points="823.97,109.71 827.41,111.66 829.20,111.89 828.65,115.79 823.74,117.74 821.63,116.41" fill="#b0b0b0" stroke="#303030" stroke-width="0.9" stroke-linejoin="round" />
<polygon points="821.63,116.41 823.74,117.74 822.18,118.75 820.78,118.05" fill="#ff0000" stroke="#ff0000" stroke-width="0.6" stroke-linejoin="round" />
<line x1="836.00" y1="107.40" x2="851.90" y2="107.40" stroke="#ff0000" stroke-width="1.3" />
<line x1="836.00" y1="122.10" x2="851.90" y2="122.10" stroke="#ff0000" stroke-width="1.3" />
<line x1="836.00" y1="114.30" x2="851.90" y2="114.30" stroke="#000" stroke-width="1.1" />
<path d="M836.5,119.8 C838.5,116 839,109 840.7,109 C842.8,109 843,121.6 845.4,121.6 C847.5,121.6 849.5,113 851.4,109.5" fill="none" stroke="#909090" stroke-width="1.1"/>
<line x1="858.90" y1="107.40" x2="874.80" y2="107.40" stroke="#ff0000" stroke-width="1.3" />
<line x1="858.90" y1="122.10" x2="874.80" y2="122.10" stroke="#ff0000" stroke-width="1.3" />
<text x="861.00" y="119.60" font-size="11.5" fill="#808000" font-weight="bold" text-anchor="start" font-family="Liberation Sans, sans-serif" >金</text>
<line x1="882.20" y1="122.10" x2="897.80" y2="107.10" stroke="#000" stroke-width="1.2" />
<line x1="890.80" y1="114.10" x2="897.40" y2="114.10" stroke="#000" stroke-width="1.2" />
<line x1="888.20" y1="117.00" x2="897.40" y2="117.00" stroke="#000" stroke-width="1.2" />
<line x1="885.60" y1="119.40" x2="897.40" y2="119.40" stroke="#000" stroke-width="1.2" />
<line x1="882.20" y1="121.80" x2="897.40" y2="121.80" stroke="#000" stroke-width="1.2" />
<text x="882.00" y="116.20" font-size="12.5" fill="#ff0000" font-weight="normal" text-anchor="start" font-family="Liberation Sans, sans-serif" >J</text>
<line x1="905.00" y1="122.10" x2="920.60" y2="107.10" stroke="#000" stroke-width="1.2" />
<line x1="913.60" y1="114.10" x2="920.20" y2="114.10" stroke="#000" stroke-width="1.2" />
<line x1="911.00" y1="117.00" x2="920.20" y2="117.00" stroke="#000" stroke-width="1.2" />
<line x1="908.40" y1="119.40" x2="920.20" y2="119.40" stroke="#000" stroke-width="1.2" />
<line x1="905.00" y1="121.80" x2="920.20" y2="121.80" stroke="#000" stroke-width="1.2" />
<text x="905.40" y="116.50" font-size="13" fill="#ff0000" font-weight="bold" text-anchor="start" font-family="Liberation Sans, sans-serif" >F</text>
<text x="928.00" y="116.60" font-size="10.5" fill="#808000" font-weight="bold" text-anchor="start" font-family="Liberation Sans, sans-serif" >金</text>
<line x1="928.00" y1="122.10" x2="943.60" y2="107.10" stroke="#000" stroke-width="1.2" />
<line x1="936.60" y1="114.10" x2="943.20" y2="114.10" stroke="#000" stroke-width="1.2" />
<line x1="934.00" y1="117.00" x2="943.20" y2="117.00" stroke="#000" stroke-width="1.2" />
<line x1="931.40" y1="119.40" x2="943.20" y2="119.40" stroke="#000" stroke-width="1.2" />
<line x1="928.00" y1="121.80" x2="943.20" y2="121.80" stroke="#000" stroke-width="1.2" />
<text x="950.60" y="117.20" font-size="12" fill="#ff0000" font-weight="bold" text-anchor="start" font-family="Liberation Sans, sans-serif" >神</text>
<line x1="951.00" y1="122.10" x2="966.60" y2="107.10" stroke="#000" stroke-width="1.2" />
<line x1="959.60" y1="114.10" x2="966.20" y2="114.10" stroke="#000" stroke-width="1.2" />
<line x1="957.00" y1="117.00" x2="966.20" y2="117.00" stroke="#000" stroke-width="1.2" />
<line x1="954.40" y1="119.40" x2="966.20" y2="119.40" stroke="#000" stroke-width="1.2" />
<line x1="951.00" y1="121.80" x2="966.20" y2="121.80" stroke="#000" stroke-width="1.2" />
<text x="973.60" y="118.00" font-size="12" fill="#ff0000" font-weight="bold" text-anchor="start" font-family="Liberation Sans, sans-serif" >赢</text>
<line x1="974.00" y1="122.10" x2="989.60" y2="107.10" stroke="#000" stroke-width="1.2" />
<line x1="982.60" y1="114.10" x2="989.20" y2="114.10" stroke="#000" stroke-width="1.2" />
<line x1="980.00" y1="117.00" x2="989.20" y2="117.00" stroke="#000" stroke-width="1.2" />
<line x1="977.40" y1="119.40" x2="989.20" y2="119.40" stroke="#000" stroke-width="1.2" />
<line x1="974.00" y1="121.80" x2="989.20" y2="121.80" stroke="#000" stroke-width="1.2" />
<text x="996.60" y="116.20" font-size="10.5" fill="#ff0000" font-weight="bold" text-anchor="start" font-family="Liberation Sans, sans-serif" >四</text>
<line x1="997.00" y1="122.10" x2="1012.60" y2="107.10" stroke="#000" stroke-width="1.2" />
<line x1="1005.60" y1="114.10" x2="1012.20" y2="114.10" stroke="#000" stroke-width="1.2" />
<line x1="1003.00" y1="117.00" x2="1012.20" y2="117.00" stroke="#000" stroke-width="1.2" />
<line x1="1000.40" y1="119.40" x2="1012.20" y2="119.40" stroke="#000" stroke-width="1.2" />
<line x1="997.00" y1="121.80" x2="1012.20" y2="121.80" stroke="#000" stroke-width="1.2" />
</svg>
<span class="t" style="left:0.5px;top:2.5px;color:#e60012;font-size:15.5px;line-height:17px;height:17px">赢</span>
<span class="t" style="left:21.3px;top:4px;letter-spacing:0.15px">赢家江恩专业版</span>
<span class="t" style="left:106.5px;top:4px;">[</span>
<span class="t" style="left:111px;top:4px;">赢家内部服务平台]</span>
<span class="t" style="left:215px;top:4px;">-</span>
<span class="t" style="left:224.5px;top:4px;">[上证指数</span>
<span class="t" style="left:283.6px;top:3.5px;font-size:13px">SH1A0001-167</span>
<span class="t" style="left:372px;top:4px;">日<span style="font-size:13px">K</span>线]</span>
<span class="t" style="left:3.5px;top:26.5px;color:#e60012;font-size:15.5px;line-height:17px;height:17px">赢</span>
<span class="t" style="left:26px;top:29px;">文件</span>
<span class="t" style="left:62px;top:29px;">浏览</span>
<span class="t" style="left:98px;top:29px;">资讯</span>
<span class="t" style="left:134px;top:29px;">江恩</span>
<span class="t" style="left:170px;top:29px;">公式选股</span>
<span class="t" style="left:230px;top:29px;">设置</span>
<span class="t" style="left:266px;top:29px;">工具</span>
<span class="t" style="left:302px;top:29px;">窗口</span>
<span class="t" style="left:338px;top:29px;">交易委托</span>
<span class="t" style="left:398px;top:29px;">帮助</span>
<span class="t" style="left:31px;top:55.5px;">行情</span>
<span class="t" style="left:84px;top:55.5px;">板块</span>
<span class="t" style="left:137.5px;top:55.5px;">K线</span>
<span class="t" style="left:186.5px;top:55.5px;">P四方形</span>
<span class="t" style="left:258.5px;top:55.5px;">9P四方形</span>
<span class="t" style="left:337.5px;top:55.5px;">P数字表</span>
<span class="t" style="left:410px;top:55.5px;">T四方形</span>
<span class="t" style="left:481px;top:55.5px;">9T四方形</span>
<span class="t" style="left:560.5px;top:55.5px;">T数字表</span>
<span class="t" style="left:632px;top:55.5px;">江恩轮</span>
<span class="t" style="left:697px;top:55.5px;">赢家轮</span>
<span class="t" style="left:762px;top:55.5px;">六角形</span>
<span class="t" style="left:827px;top:55.5px;">赢家服务</span>
<svg width="1241" height="684" viewBox="0 0 1241 684" style="position:absolute;left:0;top:0">
<line x1="70" y1="535.5" x2="1237" y2="535.5" stroke="#a0a0a0" stroke-width="1" stroke-dasharray="3.6 2.4"/>
<line x1="70" y1="552.5" x2="1237" y2="552.5" stroke="#a0a0a0" stroke-width="1" stroke-dasharray="3.6 2.4"/>
<line x1="70" y1="569.5" x2="1237" y2="569.5" stroke="#a0a0a0" stroke-width="1" stroke-dasharray="3.6 2.4"/>
<line x1="70" y1="586.5" x2="1237" y2="586.5" stroke="#a0a0a0" stroke-width="1" stroke-dasharray="3.6 2.4"/>
<line x1="70" y1="624.5" x2="1237" y2="624.5" stroke="#a0a0a0" stroke-width="1" stroke-dasharray="3.6 2.4"/>
<line x1="70" y1="639.5" x2="1237" y2="639.5" stroke="#a0a0a0" stroke-width="1" stroke-dasharray="3.6 2.4"/>
<line x1="70" y1="654.5" x2="1237" y2="654.5" stroke="#a0a0a0" stroke-width="1" stroke-dasharray="3.6 2.4"/>
<line x1="70" y1="669.5" x2="1237" y2="669.5" stroke="#a0a0a0" stroke-width="1" stroke-dasharray="3.6 2.4"/>
<line x1="70" y1="140.5" x2="1240" y2="140.5" stroke="#a8a8a8" stroke-width="1"/>
<line x1="1029" y1="450.5" x2="1066" y2="450.5" stroke="#909090" stroke-width="1" stroke-dasharray="3 2"/>
<g shape-rendering="crispEdges">
<rect x="73" y="158" width="1" height="60" fill="#ff0000"/>
<rect x="69" y="170" width="8" height="42" fill="#ff0000"/>
<rect x="80" y="165" width="1" height="22" fill="#ff0000"/>
<rect x="76" y="169" width="8" height="6" fill="#ff0000"/>
<rect x="87" y="175" width="1" height="24" fill="#ff0000"/>
<rect x="83" y="182" width="8" height="7" fill="#ff0000"/>
<rect x="94" y="172" width="1" height="24" fill="#ff0000"/>
<rect x="90" y="183" width="8" height="6" fill="#ff0000"/>
<rect x="101" y="172" width="1" height="23" fill="#ff0000"/>
<rect x="97" y="186" width="8" height="3" fill="#ff0000"/>
<rect x="108" y="200" width="1" height="47" fill="#ff0000"/>
<rect x="104" y="200" width="8" height="33" fill="#ff0000"/>
<rect x="115" y="219" width="1" height="26" fill="#ff0000"/>
<rect x="111" y="234" width="8" height="5" fill="#ff0000"/>
<rect x="122" y="232" width="1" height="27" fill="#800080"/>
<rect x="118" y="243" width="8" height="11" fill="#800080"/>
<rect x="129" y="237" width="1" height="54" fill="#800080"/>
<rect x="125" y="242" width="8" height="48" fill="#800080"/>
<rect x="136" y="283" width="1" height="26" fill="#0000ff"/>
<rect x="132" y="289" width="8" height="13" fill="#0000ff"/>
<rect x="143" y="295" width="1" height="19" fill="#0000ff"/>
<rect x="139" y="303" width="8" height="2" fill="#0000ff"/>
<rect x="150" y="292" width="1" height="42" fill="#0000ff"/>
<rect x="146" y="299" width="8" height="34" fill="#0000ff"/>
<rect x="157" y="328" width="1" height="64" fill="#0000ff"/>
<rect x="153" y="332" width="8" height="58" fill="#0000ff"/>
<rect x="164" y="370" width="1" height="40" fill="#0000ff"/>
<rect x="160" y="382" width="8" height="1" fill="#0000ff"/>
<rect x="171" y="354" width="1" height="41" fill="#0000ff"/>
<rect x="167" y="377" width="8" height="1" fill="#0000ff"/>
<rect x="178" y="360" width="1" height="24" fill="#0000ff"/>
<rect x="174" y="360" width="8" height="16" fill="#0000ff"/>
<rect x="185" y="366" width="1" height="41" fill="#0000ff"/>
<rect x="181" y="366" width="8" height="38" fill="#0000ff"/>
<rect x="192" y="356" width="1" height="53" fill="#0000ff"/>
<rect x="188" y="368" width="8" height="35" fill="#0000ff"/>
<rect x="199" y="355" width="1" height="24" fill="#0000ff"/>
<rect x="195" y="358" width="8" height="15" fill="#0000ff"/>
<rect x="206" y="343" width="1" height="42" fill="#0000ff"/>
<rect x="202" y="349" width="8" height="33" fill="#0000ff"/>
<rect x="213" y="350" width="1" height="17" fill="#0000ff"/>
<rect x="209" y="354" width="8" height="3" fill="#0000ff"/>
<rect x="220" y="367" width="1" height="33" fill="#0000ff"/>
<rect x="216" y="367" width="8" height="25" fill="#0000ff"/>
<rect x="227" y="398" width="1" height="58" fill="#0000ff"/>
<rect x="223" y="398" width="8" height="43" fill="#0000ff"/>
<rect x="234" y="432" width="1" height="30" fill="#0000ff"/>
<rect x="230" y="439" width="8" height="16" fill="#0000ff"/>
<rect x="241" y="418" width="1" height="34" fill="#0000ff"/>
<rect x="237" y="439" width="8" height="3" fill="#0000ff"/>
<rect x="248" y="426" width="1" height="40" fill="#0000ff"/>
<rect x="244" y="446" width="8" height="19" fill="#0000ff"/>
<rect x="255" y="464" width="1" height="27" fill="#0000ff"/>
<rect x="251" y="470" width="8" height="14" fill="#0000ff"/>
<rect x="262" y="465" width="1" height="36" fill="#0000ff"/>
<rect x="258" y="482" width="8" height="7" fill="#0000ff"/>
<rect x="269" y="465" width="1" height="35" fill="#0000ff"/>
<rect x="265" y="466" width="8" height="26" fill="#0000ff"/>
<rect x="276" y="466" width="1" height="22" fill="#0000ff"/>
<rect x="272" y="469" width="8" height="1" fill="#0000ff"/>
<rect x="283" y="456" width="1" height="26" fill="#0000ff"/>
<rect x="279" y="470" width="8" height="1" fill="#0000ff"/>
<rect x="290" y="478" width="1" height="21" fill="#0000ff"/>
<rect x="286" y="478" width="8" height="17" fill="#0000ff"/>
<rect x="297" y="493" width="1" height="28" fill="#0000ff"/>
<rect x="293" y="499" width="8" height="13" fill="#0000ff"/>
<rect x="304" y="482" width="1" height="30" fill="#0000ff"/>
<rect x="300" y="490" width="8" height="22" fill="#0000ff"/>
<rect x="311" y="431" width="1" height="59" fill="#0000ff"/>
<rect x="307" y="433" width="8" height="55" fill="#0000ff"/>
<rect x="318" y="432" width="1" height="18" fill="#0000ff"/>
<rect x="314" y="438" width="8" height="8" fill="#0000ff"/>
<rect x="325" y="421" width="1" height="35" fill="#800080"/>
<rect x="321" y="430" width="8" height="22" fill="#800080"/>
<rect x="332" y="443" width="1" height="19" fill="#0000ff"/>
<rect x="328" y="443" width="8" height="13" fill="#0000ff"/>
<rect x="339" y="439" width="1" height="27" fill="#800080"/>
<rect x="335" y="451" width="8" height="2" fill="#800080"/>
<rect x="346" y="433" width="1" height="14" fill="#800080"/>
<rect x="342" y="436" width="8" height="10" fill="#800080"/>
<rect x="353" y="441" width="1" height="19" fill="#800080"/>
<rect x="349" y="441" width="8" height="16" fill="#800080"/>
<rect x="360" y="443" width="1" height="39" fill="#800080"/>
<rect x="356" y="443" width="8" height="29" fill="#800080"/>
<rect x="367" y="386" width="1" height="49" fill="#ff0000"/>
<rect x="363" y="388" width="8" height="47" fill="#ff0000"/>
<rect x="374" y="354" width="1" height="38" fill="#ff0000"/>
<rect x="370" y="365" width="8" height="22" fill="#ff0000"/>
<rect x="381" y="355" width="1" height="19" fill="#ff0000"/>
<rect x="377" y="357" width="8" height="8" fill="#ff0000"/>
<rect x="388" y="340" width="1" height="34" fill="#ff0000"/>
<rect x="384" y="361" width="8" height="11" fill="#ff0000"/>
<rect x="395" y="349" width="1" height="27" fill="#ff0000"/>
<rect x="391" y="349" width="8" height="24" fill="#ff0000"/>
<rect x="402" y="322" width="1" height="23" fill="#ff0000"/>
<rect x="398" y="323" width="8" height="14" fill="#ff0000"/>
<rect x="409" y="325" width="1" height="26" fill="#ff0000"/>
<rect x="405" y="325" width="8" height="20" fill="#ff0000"/>
<rect x="416" y="300" width="1" height="54" fill="#ff0000"/>
<rect x="412" y="314" width="8" height="33" fill="#ff0000"/>
<rect x="423" y="267" width="1" height="54" fill="#ff0000"/>
<rect x="419" y="300" width="8" height="19" fill="#ff0000"/>
<rect x="430" y="327" width="1" height="44" fill="#ff0000"/>
<rect x="426" y="328" width="8" height="24" fill="#ff0000"/>
<rect x="437" y="370" width="1" height="54" fill="#800080"/>
<rect x="433" y="370" width="8" height="29" fill="#800080"/>
<rect x="444" y="386" width="1" height="80" fill="#800080"/>
<rect x="440" y="400" width="8" height="55" fill="#800080"/>
<rect x="451" y="447" width="1" height="35" fill="#0000ff"/>
<rect x="447" y="447" width="8" height="19" fill="#0000ff"/>
<rect x="458" y="411" width="1" height="41" fill="#0000ff"/>
<rect x="454" y="439" width="8" height="3" fill="#0000ff"/>
<rect x="465" y="424" width="1" height="50" fill="#0000ff"/>
<rect x="461" y="427" width="8" height="20" fill="#0000ff"/>
<rect x="472" y="398" width="1" height="41" fill="#0000ff"/>
<rect x="468" y="402" width="8" height="30" fill="#0000ff"/>
<rect x="479" y="404" width="1" height="31" fill="#0000ff"/>
<rect x="475" y="407" width="8" height="5" fill="#0000ff"/>
<rect x="486" y="402" width="1" height="33" fill="#0000ff"/>
<rect x="482" y="405" width="8" height="25" fill="#0000ff"/>
<rect x="493" y="415" width="1" height="45" fill="#0000ff"/>
<rect x="489" y="423" width="8" height="11" fill="#0000ff"/>
<rect x="500" y="397" width="1" height="37" fill="#0000ff"/>
<rect x="496" y="424" width="8" height="1" fill="#0000ff"/>
<rect x="507" y="445" width="1" height="61" fill="#0000ff"/>
<rect x="503" y="445" width="8" height="57" fill="#0000ff"/>
<rect x="514" y="491" width="1" height="28" fill="#0000ff"/>
<rect x="510" y="500" width="8" height="8" fill="#0000ff"/>
<rect x="521" y="487" width="1" height="48" fill="#ff0000"/>
<rect x="517" y="503" width="8" height="2" fill="#0000ff"/>
<rect x="528" y="464" width="1" height="36" fill="#0000ff"/>
<rect x="524" y="476" width="8" height="23" fill="#0000ff"/>
<rect x="535" y="478" width="1" height="34" fill="#0000ff"/>
<rect x="531" y="490" width="8" height="6" fill="#0000ff"/>
<rect x="542" y="469" width="1" height="33" fill="#0000ff"/>
<rect x="538" y="470" width="8" height="17" fill="#0000ff"/>
<rect x="549" y="454" width="1" height="19" fill="#0000ff"/>
<rect x="545" y="467" width="8" height="1" fill="#0000ff"/>
<rect x="556" y="472" width="1" height="26" fill="#0000ff"/>
<rect x="552" y="472" width="8" height="3" fill="#0000ff"/>
<rect x="563" y="461" width="1" height="49" fill="#0000ff"/>
<rect x="559" y="479" width="8" height="30" fill="#0000ff"/>
<rect x="570" y="432" width="1" height="87" fill="#800080"/>
<rect x="566" y="439" width="8" height="77" fill="#800080"/>
<rect x="577" y="404" width="1" height="39" fill="#800080"/>
<rect x="573" y="414" width="8" height="20" fill="#800080"/>
<rect x="584" y="397" width="1" height="28" fill="#ff0000"/>
<rect x="580" y="413" width="8" height="5" fill="#ff0000"/>
<rect x="591" y="403" width="1" height="21" fill="#ff0000"/>
<rect x="587" y="408" width="8" height="9" fill="#ff0000"/>
<rect x="598" y="404" width="1" height="39" fill="#ff0000"/>
<rect x="594" y="421" width="8" height="19" fill="#ff0000"/>
<rect x="605" y="422" width="1" height="34" fill="#ff0000"/>
<rect x="601" y="440" width="8" height="6" fill="#ff0000"/>
<rect x="612" y="438" width="1" height="31" fill="#800080"/>
<rect x="608" y="445" width="8" height="12" fill="#800080"/>
<rect x="619" y="435" width="1" height="29" fill="#800080"/>
<rect x="615" y="439" width="8" height="20" fill="#800080"/>
<rect x="626" y="420" width="1" height="19" fill="#ff0000"/>
<rect x="622" y="424" width="8" height="11" fill="#ff0000"/>
<rect x="633" y="414" width="1" height="37" fill="#ff0000"/>
<rect x="629" y="418" width="8" height="26" fill="#ff0000"/>
<rect x="640" y="422" width="1" height="33" fill="#ff0000"/>
<rect x="636" y="424" width="8" height="28" fill="#ff0000"/>
<rect x="647" y="366" width="1" height="64" fill="#ff0000"/>
<rect x="643" y="372" width="8" height="58" fill="#ff0000"/>
<rect x="654" y="358" width="1" height="16" fill="#ff0000"/>
<rect x="650" y="363" width="8" height="6" fill="#ff0000"/>
<rect x="661" y="308" width="1" height="64" fill="#ff0000"/>
<rect x="657" y="325" width="8" height="37" fill="#ff0000"/>
<rect x="668" y="319" width="1" height="23" fill="#ff0000"/>
<rect x="664" y="330" width="8" height="1" fill="#ff0000"/>
<rect x="675" y="324" width="1" height="23" fill="#ff0000"/>
<rect x="671" y="328" width="8" height="6" fill="#ff0000"/>
<rect x="682" y="335" width="1" height="37" fill="#ff0000"/>
<rect x="678" y="336" width="8" height="31" fill="#ff0000"/>
<rect x="689" y="354" width="1" height="25" fill="#ff0000"/>
<rect x="685" y="363" width="8" height="9" fill="#ff0000"/>
<rect x="696" y="356" width="1" height="18" fill="#ff0000"/>
<rect x="692" y="358" width="8" height="12" fill="#ff0000"/>
<rect x="703" y="370" width="1" height="24" fill="#ff0000"/>
<rect x="699" y="373" width="8" height="8" fill="#ff0000"/>
<rect x="710" y="366" width="1" height="49" fill="#800080"/>
<rect x="706" y="388" width="8" height="26" fill="#800080"/>
<rect x="717" y="404" width="1" height="35" fill="#800080"/>
<rect x="713" y="405" width="8" height="14" fill="#800080"/>
<rect x="724" y="401" width="1" height="23" fill="#800080"/>
<rect x="720" y="412" width="8" height="1" fill="#800080"/>
<rect x="731" y="402" width="1" height="25" fill="#0000ff"/>
<rect x="727" y="417" width="8" height="9" fill="#0000ff"/>
<rect x="738" y="415" width="1" height="39" fill="#0000ff"/>
<rect x="734" y="422" width="8" height="31" fill="#0000ff"/>
<rect x="745" y="454" width="1" height="46" fill="#0000ff"/>
<rect x="741" y="457" width="8" height="40" fill="#0000ff"/>
<rect x="752" y="472" width="1" height="32" fill="#0000ff"/>
<rect x="748" y="474" width="8" height="25" fill="#0000ff"/>
<rect x="759" y="462" width="1" height="17" fill="#0000ff"/>
<rect x="755" y="467" width="8" height="7" fill="#0000ff"/>
<rect x="766" y="464" width="1" height="28" fill="#0000ff"/>
<rect x="762" y="465" width="8" height="7" fill="#0000ff"/>
<rect x="773" y="450" width="1" height="22" fill="#0000ff"/>
<rect x="769" y="464" width="8" height="5" fill="#0000ff"/>
<rect x="780" y="469" width="1" height="21" fill="#0000ff"/>
<rect x="776" y="471" width="8" height="17" fill="#0000ff"/>
<rect x="787" y="453" width="1" height="41" fill="#0000ff"/>
<rect x="783" y="480" width="8" height="11" fill="#0000ff"/>
<rect x="794" y="479" width="1" height="21" fill="#0000ff"/>
<rect x="790" y="480" width="8" height="7" fill="#0000ff"/>
<rect x="801" y="428" width="1" height="51" fill="#0000ff"/>
<rect x="797" y="432" width="8" height="39" fill="#0000ff"/>
<rect x="808" y="421" width="1" height="23" fill="#0000ff"/>
<rect x="804" y="429" width="8" height="5" fill="#0000ff"/>
<rect x="815" y="427" width="1" height="17" fill="#0000ff"/>
<rect x="811" y="436" width="8" height="2" fill="#0000ff"/>
<rect x="822" y="439" width="1" height="31" fill="#0000ff"/>
<rect x="818" y="443" width="8" height="25" fill="#0000ff"/>
<rect x="829" y="465" width="1" height="20" fill="#0000ff"/>
<rect x="825" y="466" width="8" height="3" fill="#0000ff"/>
<rect x="836" y="471" width="1" height="36" fill="#0000ff"/>
<rect x="832" y="471" width="8" height="23" fill="#0000ff"/>
<rect x="843" y="476" width="1" height="22" fill="#0000ff"/>
<rect x="839" y="486" width="8" height="5" fill="#0000ff"/>
<rect x="850" y="468" width="1" height="45" fill="#0000ff"/>
<rect x="846" y="468" width="8" height="32" fill="#0000ff"/>
<rect x="857" y="445" width="1" height="30" fill="#800080"/>
<rect x="853" y="471" width="8" height="2" fill="#800080"/>
<rect x="864" y="456" width="1" height="22" fill="#0000ff"/>
<rect x="860" y="456" width="8" height="18" fill="#0000ff"/>
<rect x="871" y="441" width="1" height="13" fill="#ff0000"/>
<rect x="867" y="446" width="8" height="1" fill="#ff0000"/>
<rect x="878" y="443" width="1" height="15" fill="#ff0000"/>
<rect x="874" y="449" width="8" height="7" fill="#ff0000"/>
<rect x="885" y="432" width="1" height="35" fill="#800080"/>
<rect x="881" y="435" width="8" height="21" fill="#800080"/>
<rect x="892" y="426" width="1" height="24" fill="#ff0000"/>
<rect x="888" y="433" width="8" height="15" fill="#ff0000"/>
<rect x="899" y="439" width="1" height="20" fill="#ff0000"/>
<rect x="895" y="448" width="8" height="2" fill="#ff0000"/>
<rect x="906" y="436" width="1" height="16" fill="#ff0000"/>
<rect x="902" y="449" width="8" height="1" fill="#ff0000"/>
<rect x="913" y="451" width="1" height="33" fill="#800080"/>
<rect x="909" y="451" width="8" height="17" fill="#800080"/>
<rect x="920" y="447" width="1" height="32" fill="#800080"/>
<rect x="916" y="447" width="8" height="29" fill="#800080"/>
<rect x="927" y="448" width="1" height="24" fill="#800080"/>
<rect x="923" y="448" width="8" height="13" fill="#800080"/>
<rect x="934" y="442" width="1" height="29" fill="#800080"/>
<rect x="930" y="461" width="8" height="6" fill="#800080"/>
<rect x="941" y="432" width="1" height="35" fill="#800080"/>
<rect x="937" y="432" width="8" height="26" fill="#800080"/>
<rect x="948" y="427" width="1" height="14" fill="#ff0000"/>
<rect x="944" y="429" width="8" height="8" fill="#ff0000"/>
<rect x="955" y="425" width="1" height="15" fill="#ff0000"/>
<rect x="951" y="432" width="8" height="2" fill="#ff0000"/>
<rect x="962" y="404" width="1" height="33" fill="#ff0000"/>
<rect x="958" y="408" width="8" height="29" fill="#ff0000"/>
<rect x="969" y="386" width="1" height="24" fill="#ff0000"/>
<rect x="965" y="388" width="8" height="20" fill="#ff0000"/>
<rect x="976" y="395" width="1" height="21" fill="#ff0000"/>
<rect x="972" y="395" width="8" height="19" fill="#ff0000"/>
<rect x="983" y="413" width="1" height="19" fill="#ff0000"/>
<rect x="979" y="417" width="8" height="10" fill="#ff0000"/>
<rect x="990" y="424" width="1" height="54" fill="#800080"/>
<rect x="986" y="429" width="8" height="40" fill="#800080"/>
<rect x="997" y="466" width="1" height="21" fill="#0000ff"/>
<rect x="993" y="466" width="8" height="18" fill="#0000ff"/>
<rect x="1004" y="457" width="1" height="14" fill="#0000ff"/>
<rect x="1000" y="467" width="8" height="1" fill="#0000ff"/>
<rect x="1011" y="456" width="1" height="16" fill="#0000ff"/>
<rect x="1007" y="457" width="8" height="12" fill="#0000ff"/>
<rect x="1018" y="461" width="1" height="16" fill="#0000ff"/>
<rect x="1014" y="461" width="8" height="6" fill="#0000ff"/>
<rect x="1025" y="448" width="1" height="19" fill="#0000ff"/>
<rect x="1021" y="450" width="8" height="17" fill="#0000ff"/>
</g>
<rect x="160.5" y="382.4" width="6" height="1.2" fill="#ff0000"/>
<polyline points="73.25,288.25 92,268.75 112,250 127,237.5 142,230.5 154.5,229.25 164.5,231.25 177,237.5 192,252.5 209.5,276 224.5,297.5 232,305.5 252,336.25 272,366.25 283.25,380.5 292,393.75 302,405.5 312,418.75 319.5,425.5 327,432.5 337,441.25 352,450 364.5,456 377,457 392,453.75 409.5,444 420,435.6 430,426 440,416.25 450,407 460,398.75 472.5,393 485,388.5 495,387.5 507.5,389 520,395.6 532.5,405.6 545,415 557.5,425.5 570,436.25 580,443.5 594.5,452.5 609.5,457.5 622,459.5 634.5,458.5 652,453.5 669.5,445 689.5,431 707,416.5 722,404 737,396.25 746,393.5 754.5,393 767,395 782,402 802,415 822,431.25 844.5,446.25 864.5,456.25 882,460.5 897,463 912,463.75 932,462.5 952,458.75 972,455 992,450.5 1007,447 1022,444.5 1037,443.25 1054.5,443.25 1067,444.5 1077,446.75 1092,448 1111,450.5 1133,451 1217,451 1237,450.5" fill="none" stroke="#ff0000" stroke-width="1.0" stroke-linejoin="round"/>
<polyline points="73.75,217.5 82,203.75 92,196.25 102,193.75 108.25,193.5 115.75,197.5 122,205 129.5,222.5 137,240 147,267.5 155.75,295 162,312.5 170.75,338.75 179,354 187,366.25 193,374 199.5,381.25 207,373.75 215.75,369.5 220.75,372.5 227,383.75 235.75,388.75 242,398 249.5,414 259.5,445 269.5,461.25 282,468.75 297,482.5 304.5,485 312,477.5 327,468 334.5,465 342,455 352,443.75 362,442.5 372,431.25 380,417 387,403.5 399.5,376 409.5,355 419.5,342.5 425.75,340 435.75,342.5 444.5,357.5 457,387.5 461.25,397.5 468,410.6 472.5,418 480,427.5 487.5,430 495,425 500.6,422.5 507.5,431.25 513.75,441.25 520,452.5 527.5,463.75 539.5,478.75 549.5,488.75 562,483.75 572,475 582,460 592,448.75 602,441.25 612,433 619.5,432 629.5,435.5 640.75,439 650,424.5 659.5,400 669.5,380.5 678.25,365 689.5,350.5 703.25,350.75 712,366.25 722,383.75 733.25,397.5 742,417.5 752,439.5 764.5,453.75 774.5,463.75 784.5,475 789.5,477 802,470 814.5,461.25 827,458 839.5,460.5 854.5,470 864.5,473.75 877,470 887,460 899.5,452 909.5,449.5 922,451.25 934.5,455 944.5,451.25 957,447.5 967,435 978.25,423 984.5,420 994.5,426.25 1007,437.5 1017,451.25 1025.75,458.75 1033.25,462.5 1047,456.25 1059.5,453.75 1067,450.5 1092,450.5 1237,450.5" fill="none" stroke="#008080" stroke-width="1.0" stroke-linejoin="round"/>
<g shape-rendering="crispEdges">
<rect x="73" y="158" width="1" height="60" fill="#ff0000"/>
<rect x="69" y="170" width="5" height="42" fill="#ff0000"/>
<rect x="80" y="165" width="1" height="22" fill="#ff0000"/>
<rect x="76" y="169" width="5" height="6" fill="#ff0000"/>
<rect x="87" y="175" width="1" height="24" fill="#ff0000"/>
<rect x="83" y="182" width="5" height="7" fill="#ff0000"/>
<rect x="94" y="172" width="1" height="24" fill="#ff0000"/>
<rect x="90" y="183" width="5" height="6" fill="#ff0000"/>
<rect x="101" y="172" width="1" height="23" fill="#ff0000"/>
<rect x="97" y="186" width="5" height="3" fill="#ff0000"/>
<rect x="108" y="200" width="1" height="47" fill="#ff0000"/>
<rect x="104" y="200" width="5" height="33" fill="#ff0000"/>
<rect x="115" y="219" width="1" height="26" fill="#ff0000"/>
<rect x="111" y="234" width="5" height="5" fill="#ff0000"/>
<rect x="122" y="232" width="1" height="27" fill="#800080"/>
<rect x="118" y="243" width="5" height="11" fill="#800080"/>
<rect x="129" y="237" width="1" height="54" fill="#800080"/>
<rect x="125" y="242" width="5" height="48" fill="#800080"/>
<rect x="136" y="283" width="1" height="26" fill="#0000ff"/>
<rect x="132" y="289" width="5" height="13" fill="#0000ff"/>
<rect x="143" y="295" width="1" height="19" fill="#0000ff"/>
<rect x="139" y="303" width="5" height="2" fill="#0000ff"/>
<rect x="150" y="292" width="1" height="42" fill="#0000ff"/>
<rect x="146" y="299" width="5" height="34" fill="#0000ff"/>
<rect x="157" y="328" width="1" height="64" fill="#0000ff"/>
<rect x="153" y="332" width="5" height="58" fill="#0000ff"/>
<rect x="164" y="370" width="1" height="40" fill="#0000ff"/>
<rect x="160" y="382" width="5" height="1" fill="#0000ff"/>
<rect x="171" y="354" width="1" height="41" fill="#0000ff"/>
<rect x="167" y="377" width="5" height="1" fill="#0000ff"/>
<rect x="178" y="360" width="1" height="24" fill="#0000ff"/>
<rect x="174" y="360" width="5" height="16" fill="#0000ff"/>
<rect x="185" y="366" width="1" height="41" fill="#0000ff"/>
<rect x="181" y="366" width="5" height="38" fill="#0000ff"/>
<rect x="192" y="356" width="1" height="53" fill="#0000ff"/>
<rect x="188" y="368" width="5" height="35" fill="#0000ff"/>
<rect x="199" y="355" width="1" height="24" fill="#0000ff"/>
<rect x="195" y="358" width="5" height="15" fill="#0000ff"/>
<rect x="206" y="343" width="1" height="42" fill="#0000ff"/>
<rect x="202" y="349" width="5" height="33" fill="#0000ff"/>
<rect x="213" y="350" width="1" height="17" fill="#0000ff"/>
<rect x="209" y="354" width="5" height="3" fill="#0000ff"/>
<rect x="220" y="367" width="1" height="33" fill="#0000ff"/>
<rect x="216" y="367" width="5" height="25" fill="#0000ff"/>
<rect x="227" y="398" width="1" height="58" fill="#0000ff"/>
<rect x="223" y="398" width="5" height="43" fill="#0000ff"/>
<rect x="234" y="432" width="1" height="30" fill="#0000ff"/>
<rect x="230" y="439" width="5" height="16" fill="#0000ff"/>
<rect x="241" y="418" width="1" height="34" fill="#0000ff"/>
<rect x="237" y="439" width="5" height="3" fill="#0000ff"/>
<rect x="248" y="426" width="1" height="40" fill="#0000ff"/>
<rect x="244" y="446" width="5" height="19" fill="#0000ff"/>
<rect x="255" y="464" width="1" height="27" fill="#0000ff"/>
<rect x="251" y="470" width="5" height="14" fill="#0000ff"/>
<rect x="262" y="465" width="1" height="36" fill="#0000ff"/>
<rect x="258" y="482" width="5" height="7" fill="#0000ff"/>
<rect x="269" y="465" width="1" height="35" fill="#0000ff"/>
<rect x="265" y="466" width="5" height="26" fill="#0000ff"/>
<rect x="276" y="466" width="1" height="22" fill="#0000ff"/>
<rect x="272" y="469" width="5" height="1" fill="#0000ff"/>
<rect x="283" y="456" width="1" height="26" fill="#0000ff"/>
<rect x="279" y="470" width="5" height="1" fill="#0000ff"/>
<rect x="290" y="478" width="1" height="21" fill="#0000ff"/>
<rect x="286" y="478" width="5" height="17" fill="#0000ff"/>
<rect x="297" y="493" width="1" height="28" fill="#0000ff"/>
<rect x="293" y="499" width="5" height="13" fill="#0000ff"/>
<rect x="304" y="482" width="1" height="30" fill="#0000ff"/>
<rect x="300" y="490" width="5" height="22" fill="#0000ff"/>
<rect x="311" y="431" width="1" height="59" fill="#0000ff"/>
<rect x="307" y="433" width="5" height="55" fill="#0000ff"/>
<rect x="318" y="432" width="1" height="18" fill="#0000ff"/>
<rect x="314" y="438" width="5" height="8" fill="#0000ff"/>
<rect x="325" y="421" width="1" height="35" fill="#800080"/>
<rect x="321" y="430" width="5" height="22" fill="#800080"/>
<rect x="332" y="443" width="1" height="19" fill="#0000ff"/>
<rect x="328" y="443" width="5" height="13" fill="#0000ff"/>
<rect x="339" y="439" width="1" height="27" fill="#800080"/>
<rect x="335" y="451" width="5" height="2" fill="#800080"/>
<rect x="346" y="433" width="1" height="14" fill="#800080"/>
<rect x="342" y="436" width="5" height="10" fill="#800080"/>
<rect x="353" y="441" width="1" height="19" fill="#800080"/>
<rect x="349" y="441" width="5" height="16" fill="#800080"/>
<rect x="360" y="443" width="1" height="39" fill="#800080"/>
<rect x="356" y="443" width="5" height="29" fill="#800080"/>
<rect x="367" y="386" width="1" height="49" fill="#ff0000"/>
<rect x="363" y="388" width="5" height="47" fill="#ff0000"/>
<rect x="374" y="354" width="1" height="38" fill="#ff0000"/>
<rect x="370" y="365" width="5" height="22" fill="#ff0000"/>
<rect x="381" y="355" width="1" height="19" fill="#ff0000"/>
<rect x="377" y="357" width="5" height="8" fill="#ff0000"/>
<rect x="388" y="340" width="1" height="34" fill="#ff0000"/>
<rect x="384" y="361" width="5" height="11" fill="#ff0000"/>
<rect x="395" y="349" width="1" height="27" fill="#ff0000"/>
<rect x="391" y="349" width="5" height="24" fill="#ff0000"/>
<rect x="402" y="322" width="1" height="23" fill="#ff0000"/>
<rect x="398" y="323" width="5" height="14" fill="#ff0000"/>
<rect x="409" y="325" width="1" height="26" fill="#ff0000"/>
<rect x="405" y="325" width="5" height="20" fill="#ff0000"/>
<rect x="416" y="300" width="1" height="54" fill="#ff0000"/>
<rect x="412" y="314" width="5" height="33" fill="#ff0000"/>
<rect x="423" y="267" width="1" height="54" fill="#ff0000"/>
<rect x="419" y="300" width="5" height="19" fill="#ff0000"/>
<rect x="430" y="327" width="1" height="44" fill="#ff0000"/>
<rect x="426" y="328" width="5" height="24" fill="#ff0000"/>
<rect x="437" y="370" width="1" height="54" fill="#800080"/>
<rect x="433" y="370" width="5" height="29" fill="#800080"/>
<rect x="444" y="386" width="1" height="80" fill="#800080"/>
<rect x="440" y="400" width="5" height="55" fill="#800080"/>
<rect x="451" y="447" width="1" height="35" fill="#0000ff"/>
<rect x="447" y="447" width="5" height="19" fill="#0000ff"/>
<rect x="458" y="411" width="1" height="41" fill="#0000ff"/>
<rect x="454" y="439" width="5" height="3" fill="#0000ff"/>
<rect x="465" y="424" width="1" height="50" fill="#0000ff"/>
<rect x="461" y="427" width="5" height="20" fill="#0000ff"/>
<rect x="472" y="398" width="1" height="41" fill="#0000ff"/>
<rect x="468" y="402" width="5" height="30" fill="#0000ff"/>
<rect x="479" y="404" width="1" height="31" fill="#0000ff"/>
<rect x="475" y="407" width="5" height="5" fill="#0000ff"/>
<rect x="486" y="402" width="1" height="33" fill="#0000ff"/>
<rect x="482" y="405" width="5" height="25" fill="#0000ff"/>
<rect x="493" y="415" width="1" height="45" fill="#0000ff"/>
<rect x="489" y="423" width="5" height="11" fill="#0000ff"/>
<rect x="500" y="397" width="1" height="37" fill="#0000ff"/>
<rect x="496" y="424" width="5" height="1" fill="#0000ff"/>
<rect x="507" y="445" width="1" height="61" fill="#0000ff"/>
<rect x="503" y="445" width="5" height="57" fill="#0000ff"/>
<rect x="514" y="491" width="1" height="28" fill="#0000ff"/>
<rect x="510" y="500" width="5" height="8" fill="#0000ff"/>
<rect x="521" y="487" width="1" height="48" fill="#ff0000"/>
<rect x="517" y="503" width="5" height="2" fill="#0000ff"/>
<rect x="528" y="464" width="1" height="36" fill="#0000ff"/>
<rect x="524" y="476" width="5" height="23" fill="#0000ff"/>
<rect x="535" y="478" width="1" height="34" fill="#0000ff"/>
<rect x="531" y="490" width="5" height="6" fill="#0000ff"/>
<rect x="542" y="469" width="1" height="33" fill="#0000ff"/>
<rect x="538" y="470" width="5" height="17" fill="#0000ff"/>
<rect x="549" y="454" width="1" height="19" fill="#0000ff"/>
<rect x="545" y="467" width="5" height="1" fill="#0000ff"/>
<rect x="556" y="472" width="1" height="26" fill="#0000ff"/>
<rect x="552" y="472" width="5" height="3" fill="#0000ff"/>
<rect x="563" y="461" width="1" height="49" fill="#0000ff"/>
<rect x="559" y="479" width="5" height="30" fill="#0000ff"/>
<rect x="570" y="432" width="1" height="87" fill="#800080"/>
<rect x="566" y="439" width="5" height="77" fill="#800080"/>
<rect x="577" y="404" width="1" height="39" fill="#800080"/>
<rect x="573" y="414" width="5" height="20" fill="#800080"/>
<rect x="584" y="397" width="1" height="28" fill="#ff0000"/>
<rect x="580" y="413" width="5" height="5" fill="#ff0000"/>
<rect x="591" y="403" width="1" height="21" fill="#ff0000"/>
<rect x="587" y="408" width="5" height="9" fill="#ff0000"/>
<rect x="598" y="404" width="1" height="39" fill="#ff0000"/>
<rect x="594" y="421" width="5" height="19" fill="#ff0000"/>
<rect x="605" y="422" width="1" height="34" fill="#ff0000"/>
<rect x="601" y="440" width="5" height="6" fill="#ff0000"/>
<rect x="612" y="438" width="1" height="31" fill="#800080"/>
<rect x="608" y="445" width="5" height="12" fill="#800080"/>
<rect x="619" y="435" width="1" height="29" fill="#800080"/>
<rect x="615" y="439" width="5" height="20" fill="#800080"/>
<rect x="626" y="420" width="1" height="19" fill="#ff0000"/>
<rect x="622" y="424" width="5" height="11" fill="#ff0000"/>
<rect x="633" y="414" width="1" height="37" fill="#ff0000"/>
<rect x="629" y="418" width="5" height="26" fill="#ff0000"/>
<rect x="640" y="422" width="1" height="33" fill="#ff0000"/>
<rect x="636" y="424" width="5" height="28" fill="#ff0000"/>
<rect x="647" y="366" width="1" height="64" fill="#ff0000"/>
<rect x="643" y="372" width="5" height="58" fill="#ff0000"/>
<rect x="654" y="358" width="1" height="16" fill="#ff0000"/>
<rect x="650" y="363" width="5" height="6" fill="#ff0000"/>
<rect x="661" y="308" width="1" height="64" fill="#ff0000"/>
<rect x="657" y="325" width="5" height="37" fill="#ff0000"/>
<rect x="668" y="319" width="1" height="23" fill="#ff0000"/>
<rect x="664" y="330" width="5" height="1" fill="#ff0000"/>
<rect x="675" y="324" width="1" height="23" fill="#ff0000"/>
<rect x="671" y="328" width="5" height="6" fill="#ff0000"/>
<rect x="682" y="335" width="1" height="37" fill="#ff0000"/>
<rect x="678" y="336" width="5" height="31" fill="#ff0000"/>
<rect x="689" y="354" width="1" height="25" fill="#ff0000"/>
<rect x="685" y="363" width="5" height="9" fill="#ff0000"/>
<rect x="696" y="356" width="1" height="18" fill="#ff0000"/>
<rect x="692" y="358" width="5" height="12" fill="#ff0000"/>
<rect x="703" y="370" width="1" height="24" fill="#ff0000"/>
<rect x="699" y="373" width="5" height="8" fill="#ff0000"/>
<rect x="710" y="366" width="1" height="49" fill="#800080"/>
<rect x="706" y="388" width="5" height="26" fill="#800080"/>
<rect x="717" y="404" width="1" height="35" fill="#800080"/>
<rect x="713" y="405" width="5" height="14" fill="#800080"/>
<rect x="724" y="401" width="1" height="23" fill="#800080"/>
<rect x="720" y="412" width="5" height="1" fill="#800080"/>
<rect x="731" y="402" width="1" height="25" fill="#0000ff"/>
<rect x="727" y="417" width="5" height="9" fill="#0000ff"/>
<rect x="738" y="415" width="1" height="39" fill="#0000ff"/>
<rect x="734" y="422" width="5" height="31" fill="#0000ff"/>
<rect x="745" y="454" width="1" height="46" fill="#0000ff"/>
<rect x="741" y="457" width="5" height="40" fill="#0000ff"/>
<rect x="752" y="472" width="1" height="32" fill="#0000ff"/>
<rect x="748" y="474" width="5" height="25" fill="#0000ff"/>
<rect x="759" y="462" width="1" height="17" fill="#0000ff"/>
<rect x="755" y="467" width="5" height="7" fill="#0000ff"/>
<rect x="766" y="464" width="1" height="28" fill="#0000ff"/>
<rect x="762" y="465" width="5" height="7" fill="#0000ff"/>
<rect x="773" y="450" width="1" height="22" fill="#0000ff"/>
<rect x="769" y="464" width="5" height="5" fill="#0000ff"/>
<rect x="780" y="469" width="1" height="21" fill="#0000ff"/>
<rect x="776" y="471" width="5" height="17" fill="#0000ff"/>
<rect x="787" y="453" width="1" height="41" fill="#0000ff"/>
<rect x="783" y="480" width="5" height="11" fill="#0000ff"/>
<rect x="794" y="479" width="1" height="21" fill="#0000ff"/>
<rect x="790" y="480" width="5" height="7" fill="#0000ff"/>
<rect x="801" y="428" width="1" height="51" fill="#0000ff"/>
<rect x="797" y="432" width="5" height="39" fill="#0000ff"/>
<rect x="808" y="421" width="1" height="23" fill="#0000ff"/>
<rect x="804" y="429" width="5" height="5" fill="#0000ff"/>
<rect x="815" y="427" width="1" height="17" fill="#0000ff"/>
<rect x="811" y="436" width="5" height="2" fill="#0000ff"/>
<rect x="822" y="439" width="1" height="31" fill="#0000ff"/>
<rect x="818" y="443" width="5" height="25" fill="#0000ff"/>
<rect x="829" y="465" width="1" height="20" fill="#0000ff"/>
<rect x="825" y="466" width="5" height="3" fill="#0000ff"/>
<rect x="836" y="471" width="1" height="36" fill="#0000ff"/>
<rect x="832" y="471" width="5" height="23" fill="#0000ff"/>
<rect x="843" y="476" width="1" height="22" fill="#0000ff"/>
<rect x="839" y="486" width="5" height="5" fill="#0000ff"/>
<rect x="850" y="468" width="1" height="45" fill="#0000ff"/>
<rect x="846" y="468" width="5" height="32" fill="#0000ff"/>
<rect x="857" y="445" width="1" height="30" fill="#800080"/>
<rect x="853" y="471" width="5" height="2" fill="#800080"/>
<rect x="864" y="456" width="1" height="22" fill="#0000ff"/>
<rect x="860" y="456" width="5" height="18" fill="#0000ff"/>
<rect x="871" y="441" width="1" height="13" fill="#ff0000"/>
<rect x="867" y="446" width="5" height="1" fill="#ff0000"/>
<rect x="878" y="443" width="1" height="15" fill="#ff0000"/>
<rect x="874" y="449" width="5" height="7" fill="#ff0000"/>
<rect x="885" y="432" width="1" height="35" fill="#800080"/>
<rect x="881" y="435" width="5" height="21" fill="#800080"/>
<rect x="892" y="426" width="1" height="24" fill="#ff0000"/>
<rect x="888" y="433" width="5" height="15" fill="#ff0000"/>
<rect x="899" y="439" width="1" height="20" fill="#ff0000"/>
<rect x="895" y="448" width="5" height="2" fill="#ff0000"/>
<rect x="906" y="436" width="1" height="16" fill="#ff0000"/>
<rect x="902" y="449" width="5" height="1" fill="#ff0000"/>
<rect x="913" y="451" width="1" height="33" fill="#800080"/>
<rect x="909" y="451" width="5" height="17" fill="#800080"/>
<rect x="920" y="447" width="1" height="32" fill="#800080"/>
<rect x="916" y="447" width="5" height="29" fill="#800080"/>
<rect x="927" y="448" width="1" height="24" fill="#800080"/>
<rect x="923" y="448" width="5" height="13" fill="#800080"/>
<rect x="934" y="442" width="1" height="29" fill="#800080"/>
<rect x="930" y="461" width="5" height="6" fill="#800080"/>
<rect x="941" y="432" width="1" height="35" fill="#800080"/>
<rect x="937" y="432" width="5" height="26" fill="#800080"/>
<rect x="948" y="427" width="1" height="14" fill="#ff0000"/>
<rect x="944" y="429" width="5" height="8" fill="#ff0000"/>
<rect x="955" y="425" width="1" height="15" fill="#ff0000"/>
<rect x="951" y="432" width="5" height="2" fill="#ff0000"/>
<rect x="962" y="404" width="1" height="33" fill="#ff0000"/>
<rect x="958" y="408" width="5" height="29" fill="#ff0000"/>
<rect x="969" y="386" width="1" height="24" fill="#ff0000"/>
<rect x="965" y="388" width="5" height="20" fill="#ff0000"/>
<rect x="976" y="395" width="1" height="21" fill="#ff0000"/>
<rect x="972" y="395" width="5" height="19" fill="#ff0000"/>
<rect x="983" y="413" width="1" height="19" fill="#ff0000"/>
<rect x="979" y="417" width="5" height="10" fill="#ff0000"/>
<rect x="990" y="424" width="1" height="54" fill="#800080"/>
<rect x="986" y="429" width="5" height="40" fill="#800080"/>
<rect x="997" y="466" width="1" height="21" fill="#0000ff"/>
<rect x="993" y="466" width="5" height="18" fill="#0000ff"/>
<rect x="1004" y="457" width="1" height="14" fill="#0000ff"/>
<rect x="1000" y="467" width="5" height="1" fill="#0000ff"/>
<rect x="1011" y="456" width="1" height="16" fill="#0000ff"/>
<rect x="1007" y="457" width="5" height="12" fill="#0000ff"/>
<rect x="1018" y="461" width="1" height="16" fill="#0000ff"/>
<rect x="1014" y="461" width="5" height="6" fill="#0000ff"/>
<rect x="1025" y="448" width="1" height="19" fill="#0000ff"/>
<rect x="1021" y="450" width="5" height="17" fill="#0000ff"/>
</g>
<polyline points="73.6,158 93.5,163.2" fill="none" stroke="#0000ff" stroke-width="1"/>
<polygon points="77.3,154.8 84.3,154.8 80.8,158.8" fill="#000"/>
<polyline points="522,535 541,530" fill="none" stroke="#0000ff" stroke-width="1"/>
<g shape-rendering="crispEdges">
<rect x="70.5" y="535.5" width="5" height="67" fill="#fff" stroke="#ff0000" stroke-width="1"/>
<rect x="77" y="550" width="6" height="53" fill="#008000"/>
<rect x="84" y="558" width="6" height="45" fill="#008000"/>
<rect x="91" y="563" width="6" height="40" fill="#008000"/>
<rect x="98" y="556" width="6" height="47" fill="#008000"/>
<rect x="105" y="556" width="6" height="47" fill="#008000"/>
<rect x="112.5" y="566.5" width="5" height="36" fill="#fff" stroke="#ff0000" stroke-width="1"/>
<rect x="119.5" y="566.5" width="5" height="36" fill="#fff" stroke="#ff0000" stroke-width="1"/>
<rect x="126" y="559" width="6" height="44" fill="#008000"/>
<rect x="133" y="569" width="6" height="34" fill="#008000"/>
<rect x="140" y="575" width="6" height="28" fill="#008000"/>
<rect x="147" y="571" width="6" height="32" fill="#008000"/>
<rect x="154" y="565" width="6" height="38" fill="#008000"/>
<rect x="161.5" y="574.5" width="5" height="28" fill="#fff" stroke="#ff0000" stroke-width="1"/>
<rect x="168" y="573" width="6" height="30" fill="#008000"/>
<rect x="175.5" y="575.5" width="5" height="27" fill="#fff" stroke="#ff0000" stroke-width="1"/>
<rect x="182" y="569" width="6" height="34" fill="#008000"/>
<rect x="189.5" y="570.5" width="5" height="32" fill="#fff" stroke="#ff0000" stroke-width="1"/>
<rect x="196" y="571" width="6" height="32" fill="#008000"/>
<rect x="203.5" y="568.5" width="5" height="34" fill="#fff" stroke="#ff0000" stroke-width="1"/>
<rect x="210" y="573" width="6" height="30" fill="#008000"/>
<rect x="217" y="566" width="6" height="37" fill="#008000"/>
<rect x="224" y="564" width="6" height="39" fill="#008000"/>
<rect x="231.5" y="576.5" width="5" height="26" fill="#fff" stroke="#ff0000" stroke-width="1"/>
<rect x="238" y="572" width="6" height="31" fill="#008000"/>
<rect x="245" y="570" width="6" height="33" fill="#008000"/>
<rect x="252" y="570" width="6" height="33" fill="#008000"/>
<rect x="259" y="574" width="6" height="29" fill="#008000"/>
<rect x="266.5" y="573.5" width="5" height="29" fill="#fff" stroke="#ff0000" stroke-width="1"/>
<rect x="273" y="574" width="6" height="29" fill="#008000"/>
<rect x="280.5" y="572.5" width="5" height="30" fill="#fff" stroke="#ff0000" stroke-width="1"/>
<rect x="287" y="574" width="6" height="29" fill="#008000"/>
<rect x="294" y="579" width="6" height="24" fill="#008000"/>
<rect x="301.5" y="577.5" width="5" height="25" fill="#fff" stroke="#ff0000" stroke-width="1"/>
<rect x="308.5" y="560.5" width="5" height="42" fill="#fff" stroke="#ff0000" stroke-width="1"/>
<rect x="315" y="567" width="6" height="36" fill="#008000"/>
<rect x="322.5" y="564.5" width="5" height="38" fill="#fff" stroke="#ff0000" stroke-width="1"/>
<rect x="329" y="565" width="6" height="38" fill="#008000"/>
<rect x="336.5" y="572.5" width="5" height="30" fill="#fff" stroke="#ff0000" stroke-width="1"/>
<rect x="343.5" y="571.5" width="5" height="31" fill="#fff" stroke="#ff0000" stroke-width="1"/>
<rect x="350" y="576" width="6" height="27" fill="#008000"/>
<rect x="357.5" y="571.5" width="5" height="31" fill="#fff" stroke="#ff0000" stroke-width="1"/>
<rect x="364.5" y="549.5" width="5" height="53" fill="#fff" stroke="#ff0000" stroke-width="1"/>
<rect x="371.5" y="542.5" width="5" height="60" fill="#fff" stroke="#ff0000" stroke-width="1"/>
<rect x="378.5" y="548.5" width="5" height="54" fill="#fff" stroke="#ff0000" stroke-width="1"/>
<rect x="385" y="540" width="6" height="63" fill="#008000"/>
<rect x="392.5" y="555.5" width="5" height="47" fill="#fff" stroke="#ff0000" stroke-width="1"/>
<rect x="399.5" y="542.5" width="5" height="60" fill="#fff" stroke="#ff0000" stroke-width="1"/>
<rect x="406" y="541" width="6" height="62" fill="#008000"/>
<rect x="413.5" y="538.5" width="5" height="64" fill="#fff" stroke="#ff0000" stroke-width="1"/>
<rect x="420" y="535" width="6" height="68" fill="#008000"/>
<rect x="427" y="552" width="6" height="51" fill="#008000"/>
<rect x="434" y="550" width="6" height="53" fill="#008000"/>
<rect x="441" y="542" width="6" height="61" fill="#008000"/>
<rect x="448.5" y="555.5" width="5" height="47" fill="#fff" stroke="#ff0000" stroke-width="1"/>
<rect x="455.5" y="546.5" width="5" height="56" fill="#fff" stroke="#ff0000" stroke-width="1"/>
<rect x="462.5" y="555.5" width="5" height="47" fill="#fff" stroke="#ff0000" stroke-width="1"/>
<rect x="469.5" y="548.5" width="5" height="54" fill="#fff" stroke="#ff0000" stroke-width="1"/>
<rect x="476.5" y="553.5" width="5" height="49" fill="#fff" stroke="#ff0000" stroke-width="1"/>
<rect x="483" y="556" width="6" height="47" fill="#008000"/>
<rect x="490.5" y="557.5" width="5" height="45" fill="#fff" stroke="#ff0000" stroke-width="1"/>
<rect x="497" y="558" width="6" height="45" fill="#008000"/>
<rect x="504" y="553" width="6" height="50" fill="#008000"/>
<rect x="511.5" y="564.5" width="5" height="38" fill="#fff" stroke="#ff0000" stroke-width="1"/>
<rect x="518.5" y="559.5" width="5" height="43" fill="#fff" stroke="#ff0000" stroke-width="1"/>
<rect x="525.5" y="559.5" width="5" height="43" fill="#fff" stroke="#ff0000" stroke-width="1"/>
<rect x="532" y="565" width="6" height="38" fill="#008000"/>
<rect x="539.5" y="566.5" width="5" height="36" fill="#fff" stroke="#ff0000" stroke-width="1"/>
<rect x="546" y="561" width="6" height="42" fill="#008000"/>
<rect x="553.5" y="562.5" width="5" height="40" fill="#fff" stroke="#ff0000" stroke-width="1"/>
<rect x="560" y="555" width="6" height="48" fill="#008000"/>
<rect x="567.5" y="541.5" width="5" height="61" fill="#fff" stroke="#ff0000" stroke-width="1"/>
<rect x="574.5" y="539.5" width="5" height="63" fill="#fff" stroke="#ff0000" stroke-width="1"/>
<rect x="581.5" y="546.5" width="5" height="56" fill="#fff" stroke="#ff0000" stroke-width="1"/>
<rect x="588" y="559" width="6" height="44" fill="#008000"/>
<rect x="595" y="551" width="6" height="52" fill="#008000"/>
<rect x="602" y="550" width="6" height="53" fill="#008000"/>
<rect x="609" y="562" width="6" height="41" fill="#008000"/>
<rect x="616.5" y="567.5" width="5" height="35" fill="#fff" stroke="#ff0000" stroke-width="1"/>
<rect x="623.5" y="559.5" width="5" height="43" fill="#fff" stroke="#ff0000" stroke-width="1"/>
<rect x="630" y="556" width="6" height="47" fill="#008000"/>
<rect x="637.5" y="567.5" width="5" height="35" fill="#fff" stroke="#ff0000" stroke-width="1"/>
<rect x="644.5" y="545.5" width="5" height="57" fill="#fff" stroke="#ff0000" stroke-width="1"/>
<rect x="651.5" y="557.5" width="5" height="45" fill="#fff" stroke="#ff0000" stroke-width="1"/>
<rect x="658.5" y="535.5" width="5" height="67" fill="#fff" stroke="#ff0000" stroke-width="1"/>
<rect x="665.5" y="546.5" width="5" height="56" fill="#fff" stroke="#ff0000" stroke-width="1"/>
<rect x="672.5" y="559.5" width="5" height="43" fill="#fff" stroke="#ff0000" stroke-width="1"/>
<rect x="679" y="557" width="6" height="46" fill="#008000"/>
<rect x="686.5" y="564.5" width="5" height="38" fill="#fff" stroke="#ff0000" stroke-width="1"/>
<rect x="693" y="564" width="6" height="39" fill="#008000"/>
<rect x="700.5" y="565.5" width="5" height="37" fill="#fff" stroke="#ff0000" stroke-width="1"/>
<rect x="707" y="561" width="6" height="42" fill="#008000"/>
<rect x="714.5" y="560.5" width="5" height="42" fill="#fff" stroke="#ff0000" stroke-width="1"/>
<rect x="721" y="569" width="6" height="34" fill="#008000"/>
<rect x="728" y="569" width="6" height="34" fill="#008000"/>
<rect x="735" y="563" width="6" height="40" fill="#008000"/>
<rect x="742" y="564" width="6" height="39" fill="#008000"/>
<rect x="749.5" y="570.5" width="5" height="32" fill="#fff" stroke="#ff0000" stroke-width="1"/>
<rect x="756.5" y="571.5" width="5" height="31" fill="#fff" stroke="#ff0000" stroke-width="1"/>
<rect x="763.5" y="568.5" width="5" height="34" fill="#fff" stroke="#ff0000" stroke-width="1"/>
<rect x="770.5" y="571.5" width="5" height="31" fill="#fff" stroke="#ff0000" stroke-width="1"/>
<rect x="777" y="571" width="6" height="32" fill="#008000"/>
<rect x="784.5" y="569.5" width="5" height="33" fill="#fff" stroke="#ff0000" stroke-width="1"/>
<rect x="791" y="570" width="6" height="33" fill="#008000"/>
<rect x="798.5" y="553.5" width="5" height="49" fill="#fff" stroke="#ff0000" stroke-width="1"/>
<rect x="805" y="561" width="6" height="42" fill="#008000"/>
<rect x="812" y="572" width="6" height="31" fill="#008000"/>
<rect x="819" y="570" width="6" height="33" fill="#008000"/>
<rect x="826.5" y="574.5" width="5" height="28" fill="#fff" stroke="#ff0000" stroke-width="1"/>
<rect x="833" y="575" width="6" height="28" fill="#008000"/>
<rect x="840" y="576" width="6" height="27" fill="#008000"/>
<rect x="847.5" y="576.5" width="5" height="26" fill="#fff" stroke="#ff0000" stroke-width="1"/>
<rect x="854" y="571" width="6" height="32" fill="#008000"/>
<rect x="861.5" y="576.5" width="5" height="26" fill="#fff" stroke="#ff0000" stroke-width="1"/>
<rect x="868" y="573" width="6" height="30" fill="#008000"/>
<rect x="875" y="574" width="6" height="29" fill="#008000"/>
<rect x="882.5" y="568.5" width="5" height="34" fill="#fff" stroke="#ff0000" stroke-width="1"/>
<rect x="889" y="568" width="6" height="35" fill="#008000"/>
<rect x="896" y="571" width="6" height="32" fill="#008000"/>
<rect x="903" y="572" width="6" height="31" fill="#008000"/>
<rect x="910" y="572" width="6" height="31" fill="#008000"/>
<rect x="917.5" y="574.5" width="5" height="28" fill="#fff" stroke="#ff0000" stroke-width="1"/>
<rect x="924" y="574" width="6" height="29" fill="#008000"/>
<rect x="931.5" y="575.5" width="5" height="27" fill="#fff" stroke="#ff0000" stroke-width="1"/>
<rect x="938.5" y="569.5" width="5" height="33" fill="#fff" stroke="#ff0000" stroke-width="1"/>
<rect x="945.5" y="571.5" width="5" height="31" fill="#fff" stroke="#ff0000" stroke-width="1"/>
<rect x="952.5" y="568.5" width="5" height="34" fill="#fff" stroke="#ff0000" stroke-width="1"/>
<rect x="959.5" y="561.5" width="5" height="41" fill="#fff" stroke="#ff0000" stroke-width="1"/>
<rect x="966.5" y="562.5" width="5" height="40" fill="#fff" stroke="#ff0000" stroke-width="1"/>
<rect x="973" y="565" width="6" height="38" fill="#008000"/>
<rect x="980" y="565" width="6" height="38" fill="#008000"/>
<rect x="987" y="563" width="6" height="40" fill="#008000"/>
<rect x="994.5" y="574.5" width="5" height="28" fill="#fff" stroke="#ff0000" stroke-width="1"/>
<rect x="1001" y="573" width="6" height="30" fill="#008000"/>
<rect x="1008.5" y="572.5" width="5" height="30" fill="#fff" stroke="#ff0000" stroke-width="1"/>
<rect x="1015" y="574" width="6" height="29" fill="#008000"/>
<rect x="1022.5" y="568.5" width="5" height="34" fill="#fff" stroke="#ff0000" stroke-width="1"/>
<rect x="92.5" y="637" width="3" height="1" fill="#008000"/>
<rect x="99.5" y="639" width="3" height="1" fill="#008000"/>
<rect x="106.5" y="641.5" width="3" height="7" fill="#fff" stroke="#008000" stroke-width="1"/>
<rect x="113.5" y="646.5" width="3" height="8" fill="#fff" stroke="#008000" stroke-width="1"/>
<rect x="120.5" y="650.5" width="3" height="9" fill="#fff" stroke="#008000" stroke-width="1"/>
<rect x="127.5" y="656.5" width="3" height="11" fill="#fff" stroke="#008000" stroke-width="1"/>
<rect x="134.5" y="662.5" width="3" height="9" fill="#fff" stroke="#008000" stroke-width="1"/>
<rect x="141.5" y="666.5" width="3" height="7" fill="#fff" stroke="#008000" stroke-width="1"/>
<rect x="148.5" y="670.5" width="3" height="6" fill="#fff" stroke="#008000" stroke-width="1"/>
<rect x="155.5" y="674.5" width="3" height="4" fill="#fff" stroke="#008000" stroke-width="1"/>
<rect x="162.5" y="675.5" width="3" height="3" fill="#fff" stroke="#008000" stroke-width="1"/>
<rect x="169.5" y="676.5" width="3" height="2" fill="#fff" stroke="#008000" stroke-width="1"/>
<rect x="183.5" y="677" width="3" height="1" fill="#008000"/>
<rect x="204.5" y="674" width="3" height="1" fill="#ff8080"/>
<rect x="211.5" y="672.5" width="3" height="1" fill="#fff" stroke="#ff8080" stroke-width="1"/>
<rect x="218.5" y="674" width="3" height="1" fill="#ff8080"/>
<rect x="225.5" y="675" width="3" height="1" fill="#008000"/>
<rect x="239.5" y="676" width="3" height="1" fill="#008000"/>
<rect x="246.5" y="677" width="3" height="1" fill="#008000"/>
<rect x="253.5" y="678" width="3" height="1" fill="#008000"/>
<rect x="260.5" y="678" width="3" height="1" fill="#008000"/>
<rect x="267.5" y="677" width="3" height="1" fill="#ff8080"/>
<rect x="274.5" y="676" width="3" height="1" fill="#ff8080"/>
<rect x="281.5" y="675" width="3" height="1" fill="#ff8080"/>
<rect x="288.5" y="677" width="3" height="1" fill="#008000"/>
<rect x="295.5" y="677" width="3" height="1" fill="#008000"/>
<rect x="302.5" y="677" width="3" height="1" fill="#ff8080"/>
<rect x="309.5" y="670.5" width="3" height="3" fill="#fff" stroke="#ff8080" stroke-width="1"/>
<rect x="316.5" y="667.5" width="3" height="4" fill="#fff" stroke="#ff8080" stroke-width="1"/>
<rect x="323.5" y="660.5" width="3" height="6" fill="#fff" stroke="#ff8080" stroke-width="1"/>
<rect x="330.5" y="656.5" width="3" height="7" fill="#fff" stroke="#ff8080" stroke-width="1"/>
<rect x="337.5" y="653.5" width="3" height="5" fill="#fff" stroke="#ff8080" stroke-width="1"/>
<rect x="344.5" y="648.5" width="3" height="7" fill="#fff" stroke="#ff8080" stroke-width="1"/>
<rect x="351.5" y="649.5" width="3" height="4" fill="#fff" stroke="#ff8080" stroke-width="1"/>
<rect x="358.5" y="647.5" width="3" height="4" fill="#fff" stroke="#ff8080" stroke-width="1"/>
<rect x="365.5" y="642.5" width="3" height="5" fill="#fff" stroke="#ff8080" stroke-width="1"/>
<rect x="372.5" y="639.5" width="3" height="4" fill="#fff" stroke="#ff8080" stroke-width="1"/>
<rect x="379.5" y="636.5" width="3" height="5" fill="#fff" stroke="#ff8080" stroke-width="1"/>
<rect x="386.5" y="638.5" width="3" height="2" fill="#fff" stroke="#ff8080" stroke-width="1"/>
<rect x="393.5" y="636.5" width="3" height="2" fill="#fff" stroke="#ff8080" stroke-width="1"/>
<rect x="400.5" y="634.5" width="3" height="2" fill="#fff" stroke="#ff8080" stroke-width="1"/>
<rect x="407.5" y="636" width="3" height="1" fill="#ff8080"/>
<rect x="414.5" y="635" width="3" height="1" fill="#ff8080"/>
<rect x="421.5" y="636" width="3" height="1" fill="#008000"/>
<rect x="428.5" y="640.5" width="3" height="1" fill="#fff" stroke="#008000" stroke-width="1"/>
<rect x="435.5" y="642.5" width="3" height="7" fill="#fff" stroke="#008000" stroke-width="1"/>
<rect x="442.5" y="649.5" width="3" height="9" fill="#fff" stroke="#008000" stroke-width="1"/>
<rect x="449.5" y="654.5" width="3" height="9" fill="#fff" stroke="#008000" stroke-width="1"/>
<rect x="456.5" y="659.5" width="3" height="7" fill="#fff" stroke="#008000" stroke-width="1"/>
<rect x="463.5" y="662.5" width="3" height="4" fill="#fff" stroke="#008000" stroke-width="1"/>
<rect x="470.5" y="663.5" width="3" height="3" fill="#fff" stroke="#008000" stroke-width="1"/>
<rect x="477.5" y="664" width="3" height="1" fill="#008000"/>
<rect x="484.5" y="666" width="3" height="1" fill="#008000"/>
<rect x="491.5" y="667" width="3" height="1" fill="#008000"/>
<rect x="498.5" y="668" width="3" height="1" fill="#008000"/>
<rect x="505.5" y="669.5" width="3" height="4" fill="#fff" stroke="#008000" stroke-width="1"/>
<rect x="512.5" y="672.5" width="3" height="2" fill="#fff" stroke="#008000" stroke-width="1"/>
<rect x="519.5" y="674.5" width="3" height="1" fill="#fff" stroke="#008000" stroke-width="1"/>
<rect x="526.5" y="674" width="3" height="1" fill="#008000"/>
<rect x="540.5" y="669.5" width="3" height="2" fill="#fff" stroke="#ff8080" stroke-width="1"/>
<rect x="547.5" y="666.5" width="3" height="2" fill="#fff" stroke="#ff8080" stroke-width="1"/>
<rect x="554.5" y="664.5" width="3" height="2" fill="#fff" stroke="#ff8080" stroke-width="1"/>
<rect x="568.5" y="661.5" width="3" height="3" fill="#fff" stroke="#ff8080" stroke-width="1"/>
<rect x="575.5" y="654.5" width="3" height="6" fill="#fff" stroke="#ff8080" stroke-width="1"/>
<rect x="582.5" y="647.5" width="3" height="7" fill="#fff" stroke="#ff8080" stroke-width="1"/>
<rect x="589.5" y="646.5" width="3" height="5" fill="#fff" stroke="#ff8080" stroke-width="1"/>
<rect x="596.5" y="646.5" width="3" height="2" fill="#fff" stroke="#ff8080" stroke-width="1"/>
<rect x="603.5" y="648" width="3" height="1" fill="#ff8080"/>
<rect x="624.5" y="646" width="3" height="1" fill="#ff8080"/>
<rect x="638.5" y="646" width="3" height="1" fill="#ff8080"/>
<rect x="645.5" y="642.5" width="3" height="2" fill="#fff" stroke="#ff8080" stroke-width="1"/>
<rect x="652.5" y="639.5" width="3" height="3" fill="#fff" stroke="#ff8080" stroke-width="1"/>
<rect x="659.5" y="637.5" width="3" height="3" fill="#fff" stroke="#ff8080" stroke-width="1"/>
<rect x="666.5" y="638.5" width="3" height="1" fill="#fff" stroke="#ff8080" stroke-width="1"/>
<rect x="673.5" y="637" width="3" height="1" fill="#ff8080"/>
<rect x="680.5" y="640" width="3" height="1" fill="#008000"/>
<rect x="687.5" y="642.5" width="3" height="1" fill="#fff" stroke="#008000" stroke-width="1"/>
<rect x="694.5" y="643.5" width="3" height="2" fill="#fff" stroke="#008000" stroke-width="1"/>
<rect x="701.5" y="645.5" width="3" height="2" fill="#fff" stroke="#008000" stroke-width="1"/>
<rect x="708.5" y="649.5" width="3" height="4" fill="#fff" stroke="#008000" stroke-width="1"/>
<rect x="715.5" y="651.5" width="3" height="5" fill="#fff" stroke="#008000" stroke-width="1"/>
<rect x="722.5" y="654.5" width="3" height="6" fill="#fff" stroke="#008000" stroke-width="1"/>
<rect x="729.5" y="658.5" width="3" height="6" fill="#fff" stroke="#008000" stroke-width="1"/>
<rect x="736.5" y="662.5" width="3" height="8" fill="#fff" stroke="#008000" stroke-width="1"/>
<rect x="743.5" y="667.5" width="3" height="7" fill="#fff" stroke="#008000" stroke-width="1"/>
<rect x="750.5" y="670.5" width="3" height="4" fill="#fff" stroke="#008000" stroke-width="1"/>
<rect x="757.5" y="671.5" width="3" height="3" fill="#fff" stroke="#008000" stroke-width="1"/>
<rect x="764.5" y="672" width="3" height="1" fill="#008000"/>
<rect x="778.5" y="674" width="3" height="1" fill="#008000"/>
<rect x="785.5" y="674" width="3" height="1" fill="#008000"/>
<rect x="792.5" y="675" width="3" height="1" fill="#008000"/>
<rect x="799.5" y="669.5" width="3" height="2" fill="#fff" stroke="#ff8080" stroke-width="1"/>
<rect x="806.5" y="665.5" width="3" height="3" fill="#fff" stroke="#ff8080" stroke-width="1"/>
<rect x="813.5" y="660.5" width="3" height="6" fill="#fff" stroke="#ff8080" stroke-width="1"/>
<rect x="820.5" y="662.5" width="3" height="2" fill="#fff" stroke="#ff8080" stroke-width="1"/>
<rect x="827.5" y="663" width="3" height="1" fill="#ff8080"/>
<rect x="834.5" y="665" width="3" height="1" fill="#008000"/>
<rect x="841.5" y="667.5" width="3" height="1" fill="#fff" stroke="#008000" stroke-width="1"/>
<rect x="848.5" y="666" width="3" height="1" fill="#ff8080"/>
<rect x="855.5" y="664" width="3" height="1" fill="#ff8080"/>
<rect x="862.5" y="661.5" width="3" height="2" fill="#fff" stroke="#ff8080" stroke-width="1"/>
<rect x="869.5" y="655.5" width="3" height="5" fill="#fff" stroke="#ff8080" stroke-width="1"/>
<rect x="876.5" y="655.5" width="3" height="2" fill="#fff" stroke="#ff8080" stroke-width="1"/>
<rect x="883.5" y="649.5" width="3" height="5" fill="#fff" stroke="#ff8080" stroke-width="1"/>
<rect x="890.5" y="648.5" width="3" height="3" fill="#fff" stroke="#ff8080" stroke-width="1"/>
<rect x="897.5" y="648.5" width="3" height="2" fill="#fff" stroke="#ff8080" stroke-width="1"/>
<rect x="904.5" y="649" width="3" height="1" fill="#ff8080"/>
<rect x="911.5" y="650" width="3" height="1" fill="#008000"/>
<rect x="918.5" y="649" width="3" height="1" fill="#ff8080"/>
<rect x="932.5" y="650" width="3" height="1" fill="#008000"/>
<rect x="939.5" y="645.5" width="3" height="2" fill="#fff" stroke="#ff8080" stroke-width="1"/>
<rect x="946.5" y="642.5" width="3" height="3" fill="#fff" stroke="#ff8080" stroke-width="1"/>
<rect x="953.5" y="641.5" width="3" height="2" fill="#fff" stroke="#ff8080" stroke-width="1"/>
<rect x="960.5" y="639.5" width="3" height="2" fill="#fff" stroke="#ff8080" stroke-width="1"/>
<rect x="967.5" y="636.5" width="3" height="3" fill="#fff" stroke="#ff8080" stroke-width="1"/>
<rect x="981.5" y="642.5" width="3" height="1" fill="#fff" stroke="#008000" stroke-width="1"/>
<rect x="988.5" y="646.5" width="3" height="7" fill="#fff" stroke="#008000" stroke-width="1"/>
<rect x="995.5" y="650.5" width="3" height="9" fill="#fff" stroke="#008000" stroke-width="1"/>
<rect x="1002.5" y="656.5" width="3" height="8" fill="#fff" stroke="#008000" stroke-width="1"/>
<rect x="1009.5" y="659.5" width="3" height="6" fill="#fff" stroke="#008000" stroke-width="1"/>
<rect x="1016.5" y="662.5" width="3" height="6" fill="#fff" stroke="#008000" stroke-width="1"/>
<rect x="1023.5" y="664.5" width="3" height="2" fill="#fff" stroke="#008000" stroke-width="1"/>
<rect x="1030.5" y="665" width="3" height="1" fill="#008000"/>
<rect x="1037.5" y="665" width="3" height="1" fill="#008000"/>
<rect x="1072.5" y="664" width="3" height="1" fill="#ff8080"/>
<rect x="1079.5" y="663" width="3" height="1" fill="#ff8080"/>
<rect x="1086.5" y="659.5" width="3" height="2" fill="#fff" stroke="#ff8080" stroke-width="1"/>
<rect x="1093.5" y="652.5" width="3" height="4" fill="#fff" stroke="#ff8080" stroke-width="1"/>
<rect x="1100.5" y="646.5" width="3" height="7" fill="#fff" stroke="#ff8080" stroke-width="1"/>
<rect x="1107.5" y="642.5" width="3" height="6" fill="#fff" stroke="#ff8080" stroke-width="1"/>
<rect x="1114.5" y="640.5" width="3" height="6" fill="#fff" stroke="#ff8080" stroke-width="1"/>
<rect x="1121.5" y="639.5" width="3" height="4" fill="#fff" stroke="#ff8080" stroke-width="1"/>
<rect x="1135.5" y="647.5" width="3" height="1" fill="#fff" stroke="#008000" stroke-width="1"/>
<rect x="1142.5" y="649.5" width="3" height="2" fill="#fff" stroke="#008000" stroke-width="1"/>
<rect x="1149.5" y="651.5" width="3" height="2" fill="#fff" stroke="#008000" stroke-width="1"/>
<rect x="1156.5" y="653.5" width="3" height="1" fill="#fff" stroke="#008000" stroke-width="1"/>
<rect x="1163.5" y="654" width="3" height="1" fill="#008000"/>
<rect x="1170.5" y="654" width="3" height="1" fill="#008000"/>
<rect x="1177.5" y="655" width="3" height="1" fill="#008000"/>
<rect x="1184.5" y="656" width="3" height="1" fill="#008000"/>
<rect x="1191.5" y="656" width="3" height="1" fill="#008000"/>
<rect x="1198.5" y="656" width="3" height="1" fill="#008000"/>
</g>
<rect x="0" y="603" width="1241" height="2" fill="#8c8c8c"/>
<rect x="1239.4" y="128" width="1.6" height="556" fill="#9a9a9a"/>
</svg>
<span class="t date" style="left:70px;top:129px;">12-04</span>
<span class="t date" style="left:129px;top:129px;">12-18</span>
<span class="t date" style="left:200px;top:129px;">01-02</span>
<span class="t date" style="left:270px;top:129px;">01-16</span>
<span class="t date" style="left:340px;top:129px;">01-30</span>
<span class="t date" style="left:410px;top:129px;">02-20</span>
<span class="t date" style="left:480px;top:129px;">03-06</span>
<span class="t date" style="left:550px;top:129px;">03-20</span>
<span class="t date" style="left:620px;top:129px;">04-03</span>
<span class="t date" style="left:690px;top:129px;">04-18</span>
<span class="t date" style="left:760px;top:129px;">05-06</span>
<span class="t date" style="left:830px;top:129px;">05-20</span>
<span class="t date" style="left:900px;top:129px;">06-04</span>
<span class="t date" style="left:970px;top:129px;">06-18</span>
<span class="t date" style="left:1040px;top:129px;">07-02</span>
<span class="t date" style="left:1110px;top:129px;">07-16</span>
<span class="t date" style="left:1180px;top:129px;">07-30</span>
<span class="t cj blue" style="left:3px;top:133px;">日<span class="sim">K</span>线</span>
<span class="t cj" style="left:70px;top:141px;">乾坤<span class="sim">K</span>线</span>
<span class="t cj" style="left:139px;top:142px;color:#ff0000">关注线<span class="n11">=2038.6</span></span>
<span class="t cj" style="left:218px;top:142px;color:#008080">出局线<span class="n11">=2038.6</span></span>
<span class="t sim blue" style="left:1140px;top:140.5px;font-size:13px;transform:scaleY(1.15);transform-origin:0 0">1A0001</span>
<span class="t cj blue" style="left:1189px;top:141.5px;font-size:12.4px">上证指数</span>
<span class="t lab" style="left:93.5px;top:164px;">2260.8701</span>
<span class="t lab" style="left:542px;top:522.8px;">1974.3800</span>
<span class="t sim ax" style="left:0px;top:522px;">1974<span style="letter-spacing:3px">.</span>3800</span>
<span class="t sim ax" style="left:0px;top:545px;">117969705</span>
<span class="t sim ax" style="left:0px;top:562px;">78646470</span>
<span class="t sim ax" style="left:0px;top:579px;">39323235</span>
<span class="t sim ax" style="left:0px;top:617.5px;">112<span style="letter-spacing:3px">.</span>50</span>
<span class="t sim ax" style="left:0px;top:632.3px;">84<span style="letter-spacing:3px">.</span>37</span>
<span class="t sim ax" style="left:0px;top:647.3px;">56<span style="letter-spacing:3px">.</span>25</span>
<span class="t sim ax" style="left:0px;top:662.4px;">28<span style="letter-spacing:3px">.</span>12</span>
<span class="t cj blue" style="left:2px;top:605px;font-size:12.5px">能量买卖</span>
<span class="t cj" style="left:81px;top:623.5px;color:#008000">卖</span>
<span class="t cj" style="left:424.5px;top:623.5px;color:#008000">卖</span>
<span class="t cj" style="left:683px;top:623.5px;color:#008000">卖</span>
<span class="t cj" style="left:984px;top:623.5px;color:#008000">卖</span>
<span class="t cj" style="left:200px;top:661px;color:#ff0000">买</span>
<span class="t cj" style="left:270px;top:661px;color:#ff0000">买</span>
<span class="t cj" style="left:305px;top:661px;color:#ff0000">买</span>
</body></html>
